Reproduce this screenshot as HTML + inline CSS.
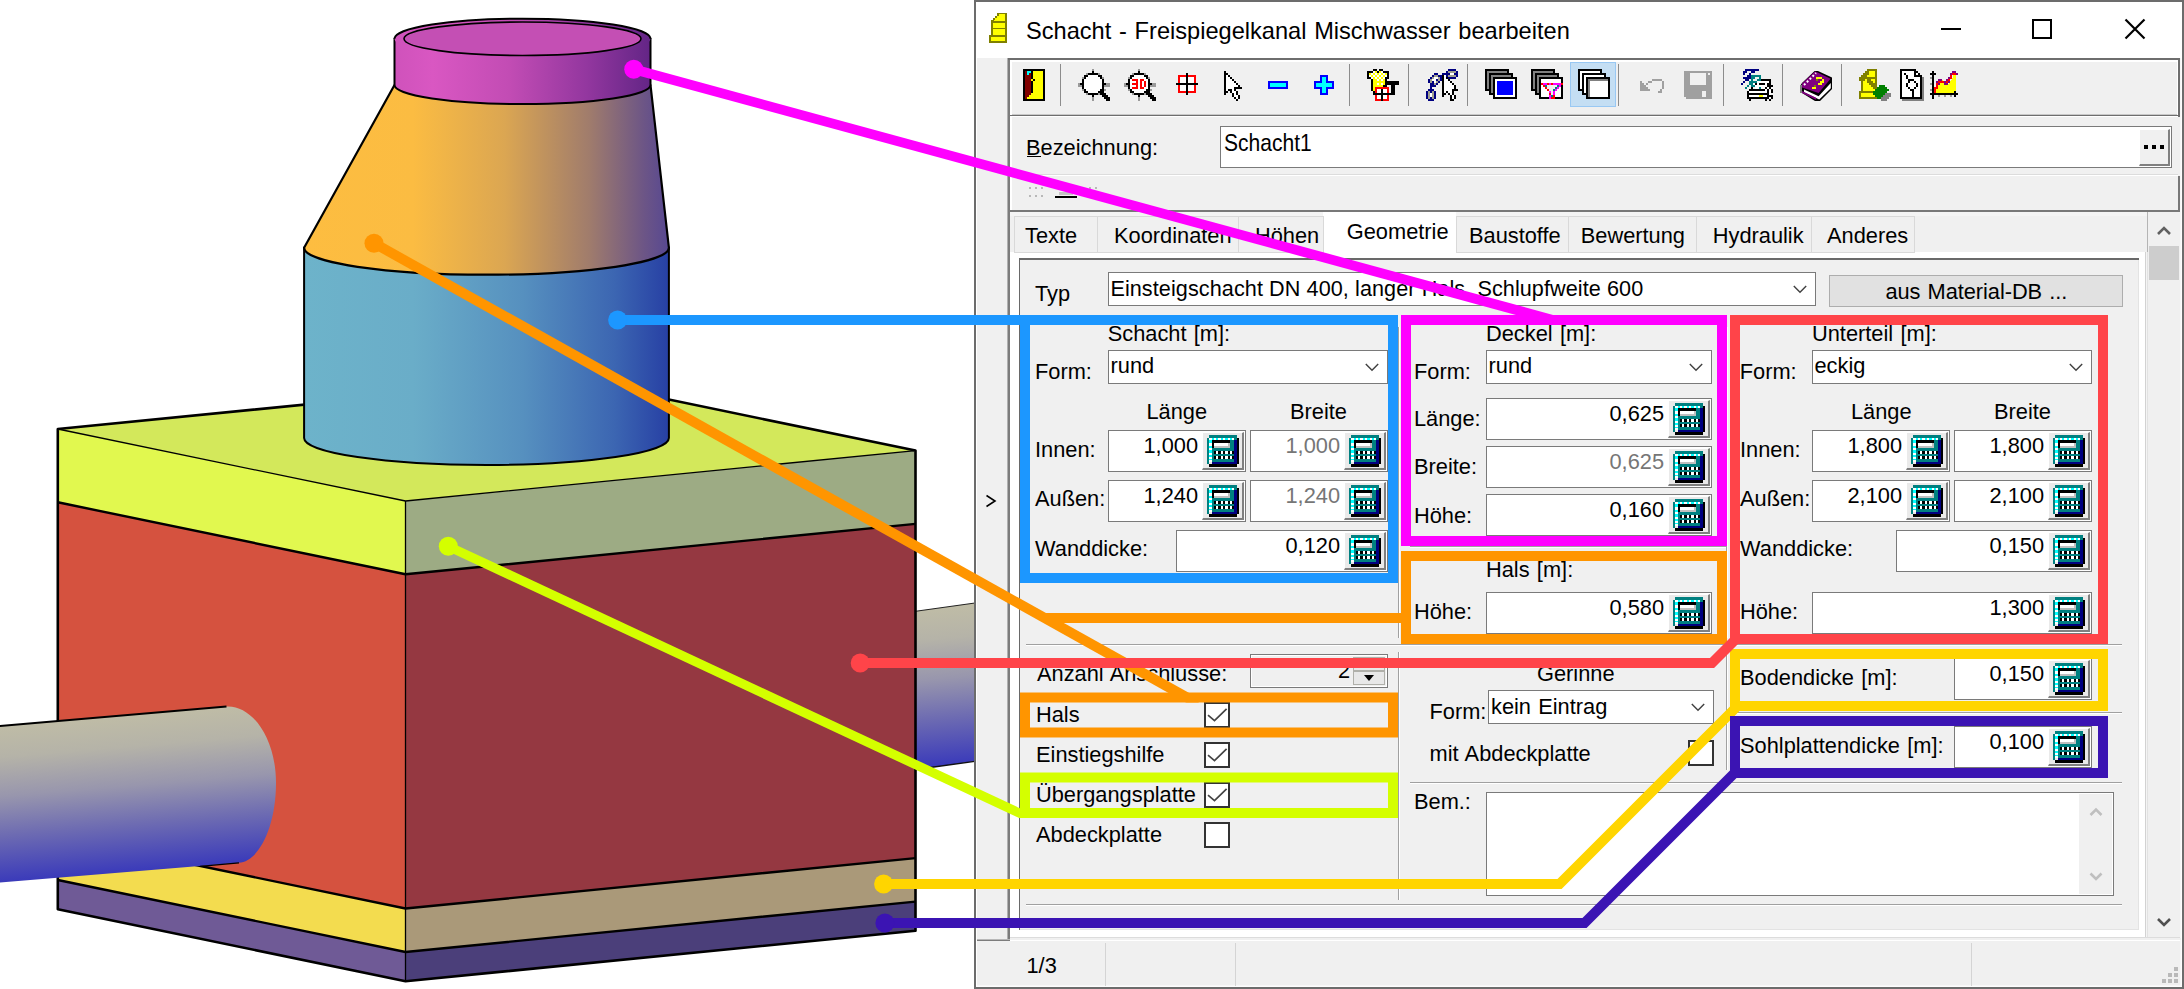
<!DOCTYPE html>
<html lang="de"><head><meta charset="utf-8"><title>Schacht - Freispiegelkanal Mischwasser bearbeiten</title>
<style>
html,body{margin:0;padding:0}
body{width:2184px;height:989px;position:relative;overflow:hidden;background:#fff;font-family:"Liberation Sans",sans-serif;font-size:21.8px;word-spacing:1.2px;color:#000}
div{position:absolute;box-sizing:content-box}
.t{white-space:nowrap;line-height:24px;height:24px}
.abs{}
.cb{background:#fff;border:1px solid #7a7a7a}
.nb{background:#fff;border:1px solid #7a7a7a}
.calc{background:#eaeaea;border-top:1px solid #fff;border-left:1px solid #fff;border-right:2px solid #808080;border-bottom:2px solid #808080;width:39px!important;height:35px!important}
.ck{background:#fff;border:2px solid #333}
.tab{background:#f0f0f0;border:1px solid #d9d9d9}
</style></head>
<body>
<svg width="0" height="0" style="position:absolute"><defs>
<g id="calcico">
<rect x="2" y="0" width="28" height="3" fill="#008080"/>
<rect x="0" y="3" width="2" height="26" fill="#008080"/>
<rect x="2" y="3" width="25" height="2" fill="#00ffff"/>
<g fill="#fff"><rect x="2" y="3" width="3" height="2"/><rect x="7" y="3" width="2" height="2"/><rect x="11" y="3" width="3" height="2"/><rect x="16" y="3" width="2" height="2"/><rect x="21" y="3" width="2" height="2"/><rect x="25" y="3" width="2" height="2"/></g>
<rect x="27" y="3" width="3" height="2" fill="#008080"/>
<rect x="2" y="5" width="3" height="22" fill="#00ffff"/>
<g fill="#fff"><rect x="2" y="8" width="3" height="3"/><rect x="2" y="13" width="3" height="2"/><rect x="2" y="18" width="3" height="2"/><rect x="2" y="22" width="3" height="2"/><rect x="2" y="25" width="3" height="2"/></g>
<rect x="5" y="5" width="22" height="22" fill="#008080"/>
<rect x="5" y="5" width="18" height="8" fill="#000"/>
<rect x="7" y="8" width="16" height="5" fill="#c0c0c0"/>
<rect x="7" y="8" width="14" height="3" fill="#fff"/>
<rect x="23" y="5" width="4" height="8" fill="#008080"/>
<rect x="7" y="16" width="20" height="3" fill="#000"/>
<rect x="7" y="21" width="20" height="3" fill="#000"/>
<g fill="#fff"><rect x="9" y="16" width="2" height="3"/><rect x="14" y="16" width="2" height="3"/><rect x="18" y="16" width="3" height="3"/><rect x="23" y="16" width="2" height="3"/><rect x="9" y="21" width="2" height="3"/><rect x="14" y="21" width="2" height="3"/><rect x="18" y="21" width="3" height="3"/><rect x="23" y="21" width="2" height="3"/></g>
<rect x="27" y="5" width="3" height="24" fill="#000080"/>
<rect x="5" y="27" width="25" height="2" fill="#000080"/>
<rect x="30" y="3" width="2" height="26" fill="#000"/>
<rect x="2" y="29" width="28" height="3" fill="#000"/>
</g>
<g id="titleico">
<path d="M8,0 H18 V31 H0 V23 H2 V7 H4 V5 H6 V3 H8 Z" fill="#808000"/>
<path d="M10,1 H16 V8 H5 V7 H6 V5 H8 V3 H10 Z" fill="#ffff00"/>
<rect x="4" y="10" width="12" height="5" fill="#ffff00"/>
<rect x="4" y="17" width="12" height="6" fill="#ffff00"/>
<rect x="2" y="25" width="14" height="4" fill="#ffff00"/>
</g>
</defs></svg>
<svg id="scene" width="980" height="989" viewBox="0 0 980 989" style="position:absolute;left:0;top:0">
<defs>
<linearGradient id="gcyl" x1="0" x2="1" y1="0" y2="0"><stop offset="0" stop-color="#6db3ca"/><stop offset="0.3" stop-color="#6aadc8"/><stop offset="0.6" stop-color="#5690bf"/><stop offset="0.85" stop-color="#3c66b2"/><stop offset="1" stop-color="#2740a4"/></linearGradient>
<linearGradient id="gcone" gradientUnits="userSpaceOnUse" x1="303" x2="670" y1="0" y2="0"><stop offset="0" stop-color="#fdbd40"/><stop offset="0.3" stop-color="#fbbc42"/><stop offset="0.55" stop-color="#dba652"/><stop offset="0.78" stop-color="#a07c6c"/><stop offset="0.93" stop-color="#6c5586"/><stop offset="1" stop-color="#564792"/></linearGradient>
<linearGradient id="gcap" x1="0" x2="1" y1="0" y2="0"><stop offset="0" stop-color="#cf52bb"/><stop offset="0.15" stop-color="#d957c2"/><stop offset="0.45" stop-color="#c24cb4"/><stop offset="0.75" stop-color="#93379f"/><stop offset="1" stop-color="#632586"/></linearGradient>
<linearGradient id="gpipe" gradientUnits="userSpaceOnUse" x1="118" y1="716" x2="131" y2="872"><stop offset="0" stop-color="#bfbca6"/><stop offset="0.2" stop-color="#b5b3a8"/><stop offset="0.45" stop-color="#9896ad"/><stop offset="0.7" stop-color="#6d6bb2"/><stop offset="1" stop-color="#3a3aba"/></linearGradient>
<linearGradient id="gpipe2" gradientUnits="userSpaceOnUse" x1="940" y1="607" x2="953" y2="765"><stop offset="0" stop-color="#bfbca6"/><stop offset="0.2" stop-color="#b5b3a8"/><stop offset="0.45" stop-color="#9896ad"/><stop offset="0.7" stop-color="#6d6bb2"/><stop offset="1" stop-color="#3a3aba"/></linearGradient>
</defs>
<polygon points="914,611.5 980,602.3 980,760.6 914,769.8" fill="url(#gpipe2)"/>
<line x1="914" y1="769.8" x2="980" y2="760.6" stroke="#111" stroke-width="1.4"/>
<line x1="914" y1="611.5" x2="980" y2="602.3" stroke="#222" stroke-width="1"/>
<polygon points="57.8,880.0 405.5,952.0 405.5,981.2 57.8,909.2" fill="#6f5a96" />
<polygon points="405.5,952.0 915.5,901.6 915.5,930.8 405.5,981.2" fill="#4b3f7a" />
<polygon points="57.8,836.5 405.5,908.5 405.5,952.0 57.8,880.0" fill="#f3dc4f" />
<polygon points="405.5,908.5 915.5,858.1 915.5,901.6 405.5,952.0" fill="#aa9979" />
<polygon points="57.8,502.3 405.5,574.3 405.5,908.5 57.8,836.5" fill="#d5523f" />
<polygon points="405.5,574.3 915.5,523.9 915.5,858.1 405.5,908.5" fill="#953841" />
<polygon points="57.8,429.0 405.5,501.0 405.5,574.3 57.8,502.3" fill="#e1f84f" />
<polygon points="405.5,501.0 915.5,450.6 915.5,523.9 405.5,574.3" fill="#9dab84" />
<polygon points="57.8,429.0 405.5,501.0 915.5,450.6 567.8,378.6" fill="#d3e85b"/>
<polyline points="57.8,502.3 405.5,574.3 915.5,523.9" fill="none" stroke="#000" stroke-width="2.4" stroke-linejoin="round"/>
<polyline points="57.8,836.5 405.5,908.5 915.5,858.1" fill="none" stroke="#000" stroke-width="2.4" stroke-linejoin="round"/>
<polyline points="57.8,880.0 405.5,952.0 915.5,901.6" fill="none" stroke="#000" stroke-width="2.4" stroke-linejoin="round"/>
<polyline points="57.8,429.0 405.5,501.0 915.5,450.6" fill="none" stroke="#000" stroke-width="1.3" stroke-linejoin="round"/>
<line x1="405.5" y1="501.0" x2="405.5" y2="981.2" stroke="#000" stroke-width="1.3"/>
<polygon points="57.8,429.0 567.8,378.6 915.5,450.6 915.5,930.8 405.5,981.2 57.8,909.2" fill="none" stroke="#000" stroke-width="2.6" stroke-linejoin="round"/>
<path d="M304.1,247.7 L304.1,438 A182.4,27 0 0 0 668.9,438 L668.9,247.7 Z" fill="url(#gcyl)" stroke="#000" stroke-width="2"/>
<path d="M394.5,85 L304.1,247.7 A182.4,27 0 0 0 668.9,247.7 L650.5,85 Z" fill="url(#gcone)" stroke="#000" stroke-width="2.2" stroke-linejoin="round"/>
<path d="M394.5,38.75 L394.5,85 A128,19 0 0 0 650.5,85 L650.5,38.75 Z" fill="url(#gcap)" stroke="#000" stroke-width="2"/>
<ellipse cx="522.5" cy="38.75" rx="128" ry="20" fill="url(#gcap)"/>
<path d="M394.5,38.75 A128,20 0 0 1 650.5,38.75" fill="none" stroke="#000" stroke-width="2"/>
<ellipse cx="522.5" cy="38.75" rx="118.5" ry="16.75" fill="#c44fb4" stroke="#000" stroke-width="1.6"/>
<path d="M-2,726.2 L226.5,706.5 C252,705 276,738 276,783 C276,828 258,862 239,862.7 L-2,882.6 Z" fill="url(#gpipe)"/>
<path d="M-2,726.2 L226.5,706.5" stroke="#000" stroke-width="1.8" fill="none"/>
<path d="M200,866.3 L239,862.9" stroke="#000" stroke-width="1.2" fill="none"/>
</svg>
<div id="win" style="left:0;top:0;width:2184px;height:989px"><div class="abs" style="left:974px;top:0px;width:1210px;height:989px;background:#6c6c6c;"></div>
<div class="abs" style="left:976px;top:2px;width:1206px;height:57px;background:#fff;"></div>
<div class="abs" style="left:976px;top:58px;width:1206px;height:929px;background:#f0f0f0;"></div>
<div class="abs" style="left:2180px;top:58px;width:1px;height:929px;background:#f7f7f7;"></div><div class="abs" style="left:2181px;top:58px;width:1px;height:929px;background:#fdfdfd;"></div><div class="abs" style="left:976px;top:985px;width:1206px;height:1px;background:#f7f7f7;"></div><div class="abs" style="left:976px;top:986px;width:1206px;height:1px;background:#fdfdfd;"></div>
<svg width="18" height="30" viewBox="0 0 18 31" preserveAspectRatio="none" style="position:absolute;left:989px;top:13px" shape-rendering="crispEdges"><use href="#titleico"/></svg>
<div class="t" style="left:1026px;top:19px;font-size:23.6px;line-height:24px">Schacht - Freispiegelkanal Mischwasser bearbeiten</div>
<div class="abs" style="left:1941px;top:28px;width:20px;height:2px;background:#000;"></div>
<div class="abs" style="left:2032px;top:19px;width:16px;height:16px;border:2px solid #000;"></div>
<svg width="24" height="24" viewBox="0 0 24 24" style="position:absolute;left:2123px;top:17px"><path d="M2.5,2.5 L21.5,21.5 M21.5,2.5 L2.5,21.5" stroke="#000" stroke-width="2.2" fill="none"/></svg>
<div class="abs" style="left:1007px;top:58px;width:1px;height:882px;background:#b0b0b0;"></div>
<div class="abs" style="left:1008px;top:58px;width:2px;height:883px;background:#7c7c7c;"></div>
<div class="abs" style="left:976px;top:2px;width:1px;height:985px;background:#fff;"></div>
<svg width="12" height="16" viewBox="0 0 12 16" style="position:absolute;left:985px;top:493px"><path d="M1.5,2.5 L10,8 L1.5,13.5" stroke="#000" stroke-width="1.6" fill="none"/></svg>
<div class="abs" style="left:1008px;top:58px;width:1172px;height:2px;background:#6e6e6e;"></div>
<div class="abs" style="left:1010px;top:60px;width:1168px;height:2px;background:#fff;"></div>
<div class="abs" style="left:1010px;top:60px;width:2px;height:150px;background:#fff;"></div>
<div class="abs" style="left:1012px;top:114px;width:1166px;height:1px;background:#c8c8c8;"></div>
<div class="abs" style="left:1010px;top:115px;width:1170px;height:1px;background:#6e6e6e;"></div>
<div class="abs" style="left:1010px;top:116px;width:1168px;height:1px;background:#fff;"></div>
<div class="abs" style="left:2177px;top:60px;width:1px;height:55px;background:#fff;"></div>
<div class="abs" style="left:2178px;top:58px;width:2px;height:59px;background:#6e6e6e;"></div>
<svg width="1170" height="54" viewBox="1010 60 1170 54" style="position:absolute;left:1010px;top:60px" shape-rendering="crispEdges"><rect x="1060" y="64" width="1" height="42" fill="#8c8c8c"/><rect x="1349" y="64" width="1" height="42" fill="#8c8c8c"/><rect x="1408" y="64" width="1" height="42" fill="#8c8c8c"/><rect x="1467" y="64" width="1" height="42" fill="#8c8c8c"/><rect x="1618" y="64" width="1" height="42" fill="#8c8c8c"/><rect x="1723" y="64" width="1" height="42" fill="#8c8c8c"/><rect x="1782" y="64" width="1" height="42" fill="#8c8c8c"/><rect x="1841" y="64" width="1" height="42" fill="#8c8c8c"/><rect x="1570.5" y="62.5" width="45" height="44" fill="#c4def3" stroke="#99c8f3" stroke-width="1"/><rect x="1023" y="69" width="22" height="2" fill="#000"/><rect x="1023" y="71" width="2" height="2" fill="#000"/><rect x="1025" y="71" width="2" height="2" fill="#800000"/><rect x="1027" y="71" width="4" height="2" fill="#00ffff"/><rect x="1031" y="71" width="2" height="2" fill="#000"/><rect x="1033" y="71" width="10" height="2" fill="#ffff00"/><rect x="1043" y="71" width="2" height="2" fill="#000"/><rect x="1023" y="73" width="2" height="2" fill="#000"/><rect x="1025" y="73" width="2" height="2" fill="#800000"/><rect x="1027" y="73" width="2" height="2" fill="#00ffff"/><rect x="1029" y="73" width="2" height="2" fill="#800000"/><rect x="1031" y="73" width="2" height="2" fill="#000"/><rect x="1033" y="73" width="10" height="2" fill="#ffff00"/><rect x="1043" y="73" width="2" height="2" fill="#000"/><rect x="1023" y="75" width="2" height="2" fill="#000"/><rect x="1025" y="75" width="6" height="2" fill="#800000"/><rect x="1031" y="75" width="2" height="2" fill="#000"/><rect x="1033" y="75" width="10" height="2" fill="#ffff00"/><rect x="1043" y="75" width="2" height="2" fill="#000"/><rect x="1023" y="77" width="2" height="2" fill="#000"/><rect x="1025" y="77" width="6" height="2" fill="#800000"/><rect x="1031" y="77" width="2" height="2" fill="#000"/><rect x="1033" y="77" width="10" height="2" fill="#ffff00"/><rect x="1043" y="77" width="2" height="2" fill="#000"/><rect x="1023" y="79" width="2" height="2" fill="#000"/><rect x="1025" y="79" width="6" height="2" fill="#800000"/><rect x="1031" y="79" width="2" height="2" fill="#ffff00"/><rect x="1033" y="79" width="2" height="2" fill="#000"/><rect x="1035" y="79" width="8" height="2" fill="#ffff00"/><rect x="1043" y="79" width="2" height="2" fill="#000"/><rect x="1023" y="81" width="2" height="2" fill="#000"/><rect x="1025" y="81" width="6" height="2" fill="#800000"/><rect x="1031" y="81" width="2" height="2" fill="#000"/><rect x="1033" y="81" width="10" height="2" fill="#ffff00"/><rect x="1043" y="81" width="2" height="2" fill="#000"/><rect x="1023" y="83" width="2" height="2" fill="#000"/><rect x="1025" y="83" width="6" height="2" fill="#800000"/><rect x="1031" y="83" width="2" height="2" fill="#000"/><rect x="1033" y="83" width="10" height="2" fill="#ffff00"/><rect x="1043" y="83" width="2" height="2" fill="#000"/><rect x="1023" y="85" width="2" height="2" fill="#000"/><rect x="1025" y="85" width="6" height="2" fill="#800000"/><rect x="1031" y="85" width="2" height="2" fill="#000"/><rect x="1033" y="85" width="10" height="2" fill="#ffff00"/><rect x="1043" y="85" width="2" height="2" fill="#000"/><rect x="1023" y="87" width="2" height="2" fill="#000"/><rect x="1025" y="87" width="6" height="2" fill="#800000"/><rect x="1031" y="87" width="2" height="2" fill="#000"/><rect x="1033" y="87" width="10" height="2" fill="#ffff00"/><rect x="1043" y="87" width="2" height="2" fill="#000"/><rect x="1023" y="89" width="2" height="2" fill="#000"/><rect x="1025" y="89" width="6" height="2" fill="#800000"/><rect x="1031" y="89" width="2" height="2" fill="#000"/><rect x="1033" y="89" width="10" height="2" fill="#ffff00"/><rect x="1043" y="89" width="2" height="2" fill="#000"/><rect x="1023" y="91" width="2" height="2" fill="#000"/><rect x="1025" y="91" width="6" height="2" fill="#800000"/><rect x="1031" y="91" width="2" height="2" fill="#000"/><rect x="1033" y="91" width="10" height="2" fill="#ffff00"/><rect x="1043" y="91" width="2" height="2" fill="#000"/><rect x="1023" y="93" width="2" height="2" fill="#000"/><rect x="1025" y="93" width="6" height="2" fill="#800000"/><rect x="1031" y="93" width="12" height="2" fill="#ffff00"/><rect x="1043" y="93" width="2" height="2" fill="#000"/><rect x="1023" y="95" width="2" height="2" fill="#000"/><rect x="1025" y="95" width="4" height="2" fill="#800000"/><rect x="1029" y="95" width="14" height="2" fill="#ffff00"/><rect x="1043" y="95" width="2" height="2" fill="#000"/><rect x="1023" y="97" width="2" height="2" fill="#000"/><rect x="1025" y="97" width="2" height="2" fill="#800000"/><rect x="1027" y="97" width="16" height="2" fill="#ffff00"/><rect x="1043" y="97" width="2" height="2" fill="#000"/><rect x="1023" y="99" width="22" height="2" fill="#000"/><rect x="1092" y="69" width="2" height="2" fill="#9a9a9a"/><rect x="1092" y="71" width="2" height="2" fill="#000"/><rect x="1086" y="73" width="2" height="2" fill="#9a9a9a"/><rect x="1088" y="73" width="10" height="2" fill="#000"/><rect x="1098" y="73" width="2" height="2" fill="#9a9a9a"/><rect x="1084" y="75" width="4" height="2" fill="#000"/><rect x="1088" y="75" width="10" height="2" fill="#fff"/><rect x="1098" y="75" width="4" height="2" fill="#000"/><rect x="1082" y="77" width="2" height="2" fill="#9a9a9a"/><rect x="1084" y="77" width="2" height="2" fill="#000"/><rect x="1086" y="77" width="14" height="2" fill="#fff"/><rect x="1100" y="77" width="2" height="2" fill="#000"/><rect x="1102" y="77" width="2" height="2" fill="#9a9a9a"/><rect x="1082" y="79" width="2" height="2" fill="#000"/><rect x="1084" y="79" width="18" height="2" fill="#fff"/><rect x="1102" y="79" width="2" height="2" fill="#000"/><rect x="1082" y="81" width="2" height="2" fill="#000"/><rect x="1084" y="81" width="18" height="2" fill="#fff"/><rect x="1102" y="81" width="2" height="2" fill="#000"/><rect x="1078" y="83" width="2" height="2" fill="#9a9a9a"/><rect x="1080" y="83" width="4" height="2" fill="#000"/><rect x="1084" y="83" width="18" height="2" fill="#fff"/><rect x="1102" y="83" width="4" height="2" fill="#000"/><rect x="1106" y="83" width="4" height="2" fill="#9a9a9a"/><rect x="1078" y="85" width="4" height="2" fill="#9a9a9a"/><rect x="1082" y="85" width="2" height="2" fill="#000"/><rect x="1084" y="85" width="18" height="2" fill="#fff"/><rect x="1102" y="85" width="2" height="2" fill="#000"/><rect x="1104" y="85" width="6" height="2" fill="#9a9a9a"/><rect x="1082" y="87" width="2" height="2" fill="#000"/><rect x="1084" y="87" width="18" height="2" fill="#fff"/><rect x="1102" y="87" width="2" height="2" fill="#000"/><rect x="1082" y="89" width="2" height="2" fill="#9a9a9a"/><rect x="1084" y="89" width="2" height="2" fill="#000"/><rect x="1086" y="89" width="14" height="2" fill="#fff"/><rect x="1100" y="89" width="4" height="2" fill="#000"/><rect x="1104" y="89" width="2" height="2" fill="#9a9a9a"/><rect x="1084" y="91" width="4" height="2" fill="#000"/><rect x="1088" y="91" width="10" height="2" fill="#fff"/><rect x="1098" y="91" width="6" height="2" fill="#000"/><rect x="1086" y="93" width="2" height="2" fill="#9a9a9a"/><rect x="1088" y="93" width="10" height="2" fill="#000"/><rect x="1098" y="93" width="2" height="2" fill="#9a9a9a"/><rect x="1100" y="93" width="6" height="2" fill="#000"/><rect x="1092" y="95" width="2" height="2" fill="#000"/><rect x="1102" y="95" width="6" height="2" fill="#000"/><rect x="1092" y="97" width="2" height="2" fill="#9a9a9a"/><rect x="1104" y="97" width="6" height="2" fill="#000"/><rect x="1092" y="99" width="2" height="2" fill="#9a9a9a"/><rect x="1106" y="99" width="4" height="2" fill="#000"/><rect x="1138" y="69" width="2" height="2" fill="#9a9a9a"/><rect x="1138" y="71" width="2" height="2" fill="#000"/><rect x="1132" y="73" width="2" height="2" fill="#9a9a9a"/><rect x="1134" y="73" width="10" height="2" fill="#000"/><rect x="1144" y="73" width="2" height="2" fill="#9a9a9a"/><rect x="1130" y="75" width="4" height="2" fill="#000"/><rect x="1134" y="75" width="10" height="2" fill="#fff"/><rect x="1144" y="75" width="4" height="2" fill="#000"/><rect x="1128" y="77" width="2" height="2" fill="#9a9a9a"/><rect x="1130" y="77" width="2" height="2" fill="#000"/><rect x="1132" y="77" width="14" height="2" fill="#fff"/><rect x="1146" y="77" width="2" height="2" fill="#000"/><rect x="1148" y="77" width="2" height="2" fill="#9a9a9a"/><rect x="1128" y="79" width="2" height="2" fill="#000"/><rect x="1130" y="79" width="2" height="2" fill="#fff"/><rect x="1132" y="79" width="6" height="2" fill="#ff0000"/><rect x="1138" y="79" width="2" height="2" fill="#fff"/><rect x="1140" y="79" width="4" height="2" fill="#ff0000"/><rect x="1144" y="79" width="4" height="2" fill="#fff"/><rect x="1148" y="79" width="2" height="2" fill="#000"/><rect x="1128" y="81" width="2" height="2" fill="#000"/><rect x="1130" y="81" width="6" height="2" fill="#fff"/><rect x="1136" y="81" width="2" height="2" fill="#ff0000"/><rect x="1138" y="81" width="2" height="2" fill="#fff"/><rect x="1140" y="81" width="2" height="2" fill="#ff0000"/><rect x="1142" y="81" width="2" height="2" fill="#fff"/><rect x="1144" y="81" width="2" height="2" fill="#ff0000"/><rect x="1146" y="81" width="2" height="2" fill="#fff"/><rect x="1148" y="81" width="2" height="2" fill="#000"/><rect x="1124" y="83" width="2" height="2" fill="#9a9a9a"/><rect x="1126" y="83" width="4" height="2" fill="#000"/><rect x="1130" y="83" width="2" height="2" fill="#fff"/><rect x="1132" y="83" width="6" height="2" fill="#ff0000"/><rect x="1138" y="83" width="2" height="2" fill="#fff"/><rect x="1140" y="83" width="2" height="2" fill="#ff0000"/><rect x="1142" y="83" width="2" height="2" fill="#fff"/><rect x="1144" y="83" width="2" height="2" fill="#ff0000"/><rect x="1146" y="83" width="2" height="2" fill="#fff"/><rect x="1148" y="83" width="4" height="2" fill="#000"/><rect x="1152" y="83" width="4" height="2" fill="#9a9a9a"/><rect x="1124" y="85" width="4" height="2" fill="#9a9a9a"/><rect x="1128" y="85" width="2" height="2" fill="#000"/><rect x="1130" y="85" width="6" height="2" fill="#fff"/><rect x="1136" y="85" width="2" height="2" fill="#ff0000"/><rect x="1138" y="85" width="2" height="2" fill="#fff"/><rect x="1140" y="85" width="2" height="2" fill="#ff0000"/><rect x="1142" y="85" width="2" height="2" fill="#fff"/><rect x="1144" y="85" width="2" height="2" fill="#ff0000"/><rect x="1146" y="85" width="2" height="2" fill="#fff"/><rect x="1148" y="85" width="2" height="2" fill="#000"/><rect x="1150" y="85" width="6" height="2" fill="#9a9a9a"/><rect x="1128" y="87" width="2" height="2" fill="#000"/><rect x="1130" y="87" width="2" height="2" fill="#fff"/><rect x="1132" y="87" width="6" height="2" fill="#ff0000"/><rect x="1138" y="87" width="2" height="2" fill="#fff"/><rect x="1140" y="87" width="4" height="2" fill="#ff0000"/><rect x="1144" y="87" width="4" height="2" fill="#fff"/><rect x="1148" y="87" width="2" height="2" fill="#000"/><rect x="1128" y="89" width="2" height="2" fill="#9a9a9a"/><rect x="1130" y="89" width="2" height="2" fill="#000"/><rect x="1132" y="89" width="14" height="2" fill="#fff"/><rect x="1146" y="89" width="4" height="2" fill="#000"/><rect x="1150" y="89" width="2" height="2" fill="#9a9a9a"/><rect x="1130" y="91" width="4" height="2" fill="#000"/><rect x="1134" y="91" width="10" height="2" fill="#fff"/><rect x="1144" y="91" width="6" height="2" fill="#000"/><rect x="1132" y="93" width="2" height="2" fill="#9a9a9a"/><rect x="1134" y="93" width="10" height="2" fill="#000"/><rect x="1144" y="93" width="2" height="2" fill="#9a9a9a"/><rect x="1146" y="93" width="6" height="2" fill="#000"/><rect x="1138" y="95" width="2" height="2" fill="#000"/><rect x="1148" y="95" width="6" height="2" fill="#000"/><rect x="1138" y="97" width="2" height="2" fill="#9a9a9a"/><rect x="1150" y="97" width="6" height="2" fill="#000"/><rect x="1138" y="99" width="2" height="2" fill="#9a9a9a"/><rect x="1152" y="99" width="4" height="2" fill="#000"/><rect x="1186" y="73" width="2" height="2" fill="#000"/><rect x="1178" y="75" width="8" height="2" fill="#ff0000"/><rect x="1186" y="75" width="2" height="2" fill="#000"/><rect x="1188" y="75" width="8" height="2" fill="#ff0000"/><rect x="1178" y="77" width="2" height="2" fill="#ff0000"/><rect x="1180" y="77" width="6" height="2" fill="#fff"/><rect x="1186" y="77" width="2" height="2" fill="#000"/><rect x="1188" y="77" width="6" height="2" fill="#fff"/><rect x="1194" y="77" width="2" height="2" fill="#ff0000"/><rect x="1178" y="79" width="2" height="2" fill="#ff0000"/><rect x="1180" y="79" width="6" height="2" fill="#fff"/><rect x="1186" y="79" width="2" height="2" fill="#000"/><rect x="1188" y="79" width="6" height="2" fill="#fff"/><rect x="1194" y="79" width="2" height="2" fill="#ff0000"/><rect x="1178" y="81" width="2" height="2" fill="#ff0000"/><rect x="1180" y="81" width="6" height="2" fill="#fff"/><rect x="1186" y="81" width="2" height="2" fill="#000"/><rect x="1188" y="81" width="6" height="2" fill="#fff"/><rect x="1194" y="81" width="2" height="2" fill="#ff0000"/><rect x="1176" y="83" width="22" height="2" fill="#000"/><rect x="1178" y="85" width="2" height="2" fill="#ff0000"/><rect x="1180" y="85" width="6" height="2" fill="#fff"/><rect x="1186" y="85" width="2" height="2" fill="#000"/><rect x="1188" y="85" width="6" height="2" fill="#fff"/><rect x="1194" y="85" width="2" height="2" fill="#ff0000"/><rect x="1178" y="87" width="2" height="2" fill="#ff0000"/><rect x="1180" y="87" width="6" height="2" fill="#fff"/><rect x="1186" y="87" width="2" height="2" fill="#000"/><rect x="1188" y="87" width="6" height="2" fill="#fff"/><rect x="1194" y="87" width="2" height="2" fill="#ff0000"/><rect x="1178" y="89" width="2" height="2" fill="#ff0000"/><rect x="1180" y="89" width="6" height="2" fill="#fff"/><rect x="1186" y="89" width="2" height="2" fill="#000"/><rect x="1188" y="89" width="6" height="2" fill="#fff"/><rect x="1194" y="89" width="2" height="2" fill="#ff0000"/><rect x="1178" y="91" width="8" height="2" fill="#ff0000"/><rect x="1186" y="91" width="2" height="2" fill="#000"/><rect x="1188" y="91" width="8" height="2" fill="#ff0000"/><rect x="1186" y="93" width="2" height="2" fill="#000"/><rect x="1224" y="71" width="2" height="2" fill="#000"/><rect x="1224" y="73" width="4" height="2" fill="#000"/><rect x="1224" y="75" width="2" height="2" fill="#000"/><rect x="1226" y="75" width="2" height="2" fill="#fff"/><rect x="1228" y="75" width="2" height="2" fill="#000"/><rect x="1224" y="77" width="2" height="2" fill="#000"/><rect x="1226" y="77" width="4" height="2" fill="#fff"/><rect x="1230" y="77" width="2" height="2" fill="#000"/><rect x="1224" y="79" width="2" height="2" fill="#000"/><rect x="1226" y="79" width="6" height="2" fill="#fff"/><rect x="1232" y="79" width="2" height="2" fill="#000"/><rect x="1224" y="81" width="2" height="2" fill="#000"/><rect x="1226" y="81" width="8" height="2" fill="#fff"/><rect x="1234" y="81" width="2" height="2" fill="#000"/><rect x="1224" y="83" width="2" height="2" fill="#000"/><rect x="1226" y="83" width="10" height="2" fill="#fff"/><rect x="1236" y="83" width="2" height="2" fill="#000"/><rect x="1224" y="85" width="2" height="2" fill="#000"/><rect x="1226" y="85" width="12" height="2" fill="#fff"/><rect x="1238" y="85" width="2" height="2" fill="#000"/><rect x="1224" y="87" width="2" height="2" fill="#000"/><rect x="1226" y="87" width="8" height="2" fill="#fff"/><rect x="1234" y="87" width="8" height="2" fill="#000"/><rect x="1224" y="89" width="2" height="2" fill="#000"/><rect x="1226" y="89" width="2" height="2" fill="#fff"/><rect x="1228" y="89" width="4" height="2" fill="#000"/><rect x="1232" y="89" width="2" height="2" fill="#fff"/><rect x="1234" y="89" width="2" height="2" fill="#000"/><rect x="1224" y="91" width="4" height="2" fill="#000"/><rect x="1230" y="91" width="2" height="2" fill="#000"/><rect x="1232" y="91" width="4" height="2" fill="#fff"/><rect x="1236" y="91" width="2" height="2" fill="#000"/><rect x="1224" y="93" width="2" height="2" fill="#000"/><rect x="1232" y="93" width="2" height="2" fill="#000"/><rect x="1234" y="93" width="2" height="2" fill="#fff"/><rect x="1236" y="93" width="2" height="2" fill="#000"/><rect x="1232" y="95" width="2" height="2" fill="#000"/><rect x="1234" y="95" width="4" height="2" fill="#fff"/><rect x="1238" y="95" width="2" height="2" fill="#000"/><rect x="1234" y="97" width="2" height="2" fill="#000"/><rect x="1236" y="97" width="2" height="2" fill="#fff"/><rect x="1238" y="97" width="2" height="2" fill="#000"/><rect x="1236" y="99" width="2" height="2" fill="#000"/><rect x="1269" y="82" width="18" height="6" fill="#00ffff" stroke="#0000ff" stroke-width="2"/><path d="M1321,76 H1327 V82 H1333 V88 H1327 V94 H1321 V88 H1315 V82 H1321 Z" fill="#00ffff" stroke="#0000ff" stroke-width="2"/><rect x="1373" y="69" width="4" height="2" fill="#000"/><rect x="1379" y="69" width="4" height="2" fill="#000"/><rect x="1367" y="71" width="6" height="2" fill="#000"/><rect x="1373" y="71" width="2" height="2" fill="#fff"/><rect x="1375" y="71" width="2" height="2" fill="#ffff00"/><rect x="1377" y="71" width="2" height="2" fill="#000"/><rect x="1379" y="71" width="2" height="2" fill="#ffff00"/><rect x="1381" y="71" width="2" height="2" fill="#fff"/><rect x="1383" y="71" width="6" height="2" fill="#000"/><rect x="1367" y="73" width="2" height="2" fill="#000"/><rect x="1369" y="73" width="2" height="2" fill="#ffff00"/><rect x="1371" y="73" width="2" height="2" fill="#fff"/><rect x="1373" y="73" width="2" height="2" fill="#ffff00"/><rect x="1375" y="73" width="2" height="2" fill="#fff"/><rect x="1377" y="73" width="2" height="2" fill="#ffff00"/><rect x="1379" y="73" width="2" height="2" fill="#fff"/><rect x="1381" y="73" width="2" height="2" fill="#ffff00"/><rect x="1383" y="73" width="2" height="2" fill="#fff"/><rect x="1385" y="73" width="2" height="2" fill="#ffff00"/><rect x="1387" y="73" width="2" height="2" fill="#000"/><rect x="1367" y="75" width="2" height="2" fill="#000"/><rect x="1369" y="75" width="2" height="2" fill="#fff"/><rect x="1371" y="75" width="2" height="2" fill="#ffff00"/><rect x="1373" y="75" width="2" height="2" fill="#fff"/><rect x="1375" y="75" width="2" height="2" fill="#ffff00"/><rect x="1377" y="75" width="2" height="2" fill="#fff"/><rect x="1379" y="75" width="2" height="2" fill="#ffff00"/><rect x="1381" y="75" width="2" height="2" fill="#fff"/><rect x="1383" y="75" width="2" height="2" fill="#ffff00"/><rect x="1385" y="75" width="2" height="2" fill="#fff"/><rect x="1387" y="75" width="2" height="2" fill="#000"/><rect x="1367" y="77" width="4" height="2" fill="#000"/><rect x="1371" y="77" width="2" height="2" fill="#fff"/><rect x="1373" y="77" width="2" height="2" fill="#ffff00"/><rect x="1375" y="77" width="2" height="2" fill="#fff"/><rect x="1377" y="77" width="2" height="2" fill="#ffff00"/><rect x="1379" y="77" width="2" height="2" fill="#fff"/><rect x="1381" y="77" width="2" height="2" fill="#ffff00"/><rect x="1383" y="77" width="2" height="2" fill="#fff"/><rect x="1385" y="77" width="4" height="2" fill="#000"/><rect x="1371" y="79" width="2" height="2" fill="#000"/><rect x="1373" y="79" width="4" height="2" fill="#ffff00"/><rect x="1377" y="79" width="2" height="2" fill="#fff"/><rect x="1379" y="79" width="2" height="2" fill="#ffff00"/><rect x="1381" y="79" width="2" height="2" fill="#fff"/><rect x="1383" y="79" width="2" height="2" fill="#ffff00"/><rect x="1385" y="79" width="2" height="2" fill="#000"/><rect x="1371" y="81" width="2" height="2" fill="#000"/><rect x="1373" y="81" width="12" height="2" fill="#ffff00"/><rect x="1385" y="81" width="14" height="2" fill="#000"/><rect x="1371" y="83" width="2" height="2" fill="#000"/><rect x="1373" y="83" width="4" height="2" fill="#ffff00"/><rect x="1377" y="83" width="2" height="2" fill="#fff"/><rect x="1379" y="83" width="2" height="2" fill="#ffff00"/><rect x="1381" y="83" width="2" height="2" fill="#fff"/><rect x="1383" y="83" width="2" height="2" fill="#ffff00"/><rect x="1385" y="83" width="14" height="2" fill="#000"/><rect x="1371" y="85" width="2" height="2" fill="#000"/><rect x="1373" y="85" width="10" height="2" fill="#ffff00"/><rect x="1383" y="85" width="4" height="2" fill="#000"/><rect x="1391" y="85" width="4" height="2" fill="#000"/><rect x="1371" y="87" width="2" height="2" fill="#000"/><rect x="1373" y="87" width="2" height="2" fill="#ffff00"/><rect x="1375" y="87" width="14" height="2" fill="#ff0000"/><rect x="1391" y="87" width="4" height="2" fill="#000"/><rect x="1371" y="89" width="2" height="2" fill="#000"/><rect x="1373" y="89" width="2" height="2" fill="#ffff00"/><rect x="1375" y="89" width="2" height="2" fill="#ff0000"/><rect x="1377" y="89" width="4" height="2" fill="#fff"/><rect x="1381" y="89" width="2" height="2" fill="#000"/><rect x="1383" y="89" width="4" height="2" fill="#fff"/><rect x="1387" y="89" width="2" height="2" fill="#ff0000"/><rect x="1391" y="89" width="4" height="2" fill="#000"/><rect x="1373" y="91" width="2" height="2" fill="#000"/><rect x="1375" y="91" width="2" height="2" fill="#ff0000"/><rect x="1377" y="91" width="4" height="2" fill="#fff"/><rect x="1381" y="91" width="2" height="2" fill="#000"/><rect x="1383" y="91" width="4" height="2" fill="#fff"/><rect x="1387" y="91" width="2" height="2" fill="#ff0000"/><rect x="1391" y="91" width="4" height="2" fill="#000"/><rect x="1373" y="93" width="22" height="2" fill="#000"/><rect x="1375" y="95" width="2" height="2" fill="#ff0000"/><rect x="1377" y="95" width="4" height="2" fill="#fff"/><rect x="1381" y="95" width="2" height="2" fill="#000"/><rect x="1383" y="95" width="4" height="2" fill="#fff"/><rect x="1387" y="95" width="2" height="2" fill="#ff0000"/><rect x="1375" y="97" width="2" height="2" fill="#ff0000"/><rect x="1377" y="97" width="4" height="2" fill="#fff"/><rect x="1381" y="97" width="2" height="2" fill="#000"/><rect x="1383" y="97" width="4" height="2" fill="#fff"/><rect x="1387" y="97" width="2" height="2" fill="#ff0000"/><rect x="1375" y="99" width="6" height="2" fill="#ff0000"/><rect x="1381" y="99" width="2" height="2" fill="#000"/><rect x="1383" y="99" width="6" height="2" fill="#ff0000"/><rect x="1448" y="69" width="8" height="2" fill="#000080"/><rect x="1446" y="71" width="2" height="2" fill="#000080"/><rect x="1448" y="71" width="8" height="2" fill="#a0a090"/><rect x="1456" y="71" width="2" height="2" fill="#000080"/><rect x="1434" y="73" width="4" height="2" fill="#000080"/><rect x="1442" y="73" width="8" height="2" fill="#000080"/><rect x="1450" y="73" width="4" height="2" fill="#fff"/><rect x="1454" y="73" width="4" height="2" fill="#000080"/><rect x="1432" y="75" width="2" height="2" fill="#000080"/><rect x="1434" y="75" width="4" height="2" fill="#a0a090"/><rect x="1438" y="75" width="4" height="2" fill="#000080"/><rect x="1442" y="75" width="2" height="2" fill="#000"/><rect x="1444" y="75" width="2" height="2" fill="#fff"/><rect x="1446" y="75" width="2" height="2" fill="#000080"/><rect x="1448" y="75" width="8" height="2" fill="#a0a090"/><rect x="1456" y="75" width="2" height="2" fill="#000080"/><rect x="1430" y="77" width="2" height="2" fill="#000080"/><rect x="1432" y="77" width="2" height="2" fill="#a0a090"/><rect x="1434" y="77" width="4" height="2" fill="#fff"/><rect x="1438" y="77" width="2" height="2" fill="#a0a090"/><rect x="1440" y="77" width="2" height="2" fill="#000080"/><rect x="1442" y="77" width="2" height="2" fill="#000"/><rect x="1444" y="77" width="2" height="2" fill="#fff"/><rect x="1446" y="77" width="2" height="2" fill="#000"/><rect x="1448" y="77" width="8" height="2" fill="#000080"/><rect x="1428" y="79" width="2" height="2" fill="#000080"/><rect x="1430" y="79" width="2" height="2" fill="#a0a090"/><rect x="1432" y="79" width="4" height="2" fill="#fff"/><rect x="1436" y="79" width="2" height="2" fill="#000080"/><rect x="1438" y="79" width="2" height="2" fill="#a0a090"/><rect x="1440" y="79" width="2" height="2" fill="#000080"/><rect x="1442" y="79" width="2" height="2" fill="#000"/><rect x="1444" y="79" width="4" height="2" fill="#fff"/><rect x="1448" y="79" width="2" height="2" fill="#000"/><rect x="1428" y="81" width="2" height="2" fill="#000080"/><rect x="1430" y="81" width="2" height="2" fill="#a0a090"/><rect x="1432" y="81" width="2" height="2" fill="#000080"/><rect x="1434" y="81" width="2" height="2" fill="#fff"/><rect x="1436" y="81" width="2" height="2" fill="#a0a090"/><rect x="1438" y="81" width="2" height="2" fill="#000080"/><rect x="1442" y="81" width="2" height="2" fill="#000"/><rect x="1444" y="81" width="6" height="2" fill="#fff"/><rect x="1450" y="81" width="2" height="2" fill="#000"/><rect x="1430" y="83" width="4" height="2" fill="#000080"/><rect x="1434" y="83" width="2" height="2" fill="#a0a090"/><rect x="1436" y="83" width="2" height="2" fill="#000080"/><rect x="1442" y="83" width="2" height="2" fill="#000"/><rect x="1444" y="83" width="8" height="2" fill="#fff"/><rect x="1452" y="83" width="2" height="2" fill="#000"/><rect x="1430" y="85" width="6" height="2" fill="#000080"/><rect x="1442" y="85" width="2" height="2" fill="#000"/><rect x="1444" y="85" width="10" height="2" fill="#fff"/><rect x="1454" y="85" width="2" height="2" fill="#000"/><rect x="1430" y="87" width="2" height="2" fill="#000080"/><rect x="1442" y="87" width="2" height="2" fill="#000"/><rect x="1444" y="87" width="10" height="2" fill="#fff"/><rect x="1454" y="87" width="2" height="2" fill="#000"/><rect x="1428" y="89" width="6" height="2" fill="#000080"/><rect x="1442" y="89" width="2" height="2" fill="#000"/><rect x="1444" y="89" width="8" height="2" fill="#fff"/><rect x="1452" y="89" width="6" height="2" fill="#000"/><rect x="1426" y="91" width="2" height="2" fill="#000080"/><rect x="1428" y="91" width="2" height="2" fill="#a0a090"/><rect x="1430" y="91" width="2" height="2" fill="#000080"/><rect x="1432" y="91" width="2" height="2" fill="#a0a090"/><rect x="1434" y="91" width="2" height="2" fill="#000080"/><rect x="1442" y="91" width="2" height="2" fill="#000"/><rect x="1444" y="91" width="2" height="2" fill="#fff"/><rect x="1446" y="91" width="2" height="2" fill="#000"/><rect x="1448" y="91" width="4" height="2" fill="#fff"/><rect x="1452" y="91" width="2" height="2" fill="#000"/><rect x="1426" y="93" width="2" height="2" fill="#000080"/><rect x="1428" y="93" width="2" height="2" fill="#a0a090"/><rect x="1430" y="93" width="2" height="2" fill="#fff"/><rect x="1432" y="93" width="2" height="2" fill="#a0a090"/><rect x="1434" y="93" width="2" height="2" fill="#000080"/><rect x="1442" y="93" width="4" height="2" fill="#000"/><rect x="1448" y="93" width="2" height="2" fill="#000"/><rect x="1450" y="93" width="2" height="2" fill="#fff"/><rect x="1452" y="93" width="2" height="2" fill="#000"/><rect x="1426" y="95" width="2" height="2" fill="#000080"/><rect x="1428" y="95" width="2" height="2" fill="#a0a090"/><rect x="1430" y="95" width="2" height="2" fill="#fff"/><rect x="1432" y="95" width="2" height="2" fill="#a0a090"/><rect x="1434" y="95" width="2" height="2" fill="#000080"/><rect x="1442" y="95" width="2" height="2" fill="#000"/><rect x="1450" y="95" width="2" height="2" fill="#000"/><rect x="1452" y="95" width="2" height="2" fill="#fff"/><rect x="1454" y="95" width="2" height="2" fill="#000"/><rect x="1426" y="97" width="2" height="2" fill="#000080"/><rect x="1428" y="97" width="2" height="2" fill="#a0a090"/><rect x="1430" y="97" width="2" height="2" fill="#000080"/><rect x="1432" y="97" width="2" height="2" fill="#a0a090"/><rect x="1434" y="97" width="2" height="2" fill="#000080"/><rect x="1450" y="97" width="2" height="2" fill="#000"/><rect x="1452" y="97" width="2" height="2" fill="#fff"/><rect x="1454" y="97" width="2" height="2" fill="#000"/><rect x="1428" y="99" width="6" height="2" fill="#000080"/><rect x="1450" y="99" width="4" height="2" fill="#000"/><rect x="1485" y="69" width="24" height="2" fill="#000"/><rect x="1485" y="71" width="2" height="2" fill="#000"/><rect x="1487" y="71" width="20" height="2" fill="#808080"/><rect x="1507" y="71" width="2" height="2" fill="#000"/><rect x="1485" y="73" width="2" height="2" fill="#000"/><rect x="1487" y="73" width="2" height="2" fill="#808080"/><rect x="1489" y="73" width="24" height="2" fill="#000"/><rect x="1485" y="75" width="2" height="2" fill="#000"/><rect x="1487" y="75" width="2" height="2" fill="#808080"/><rect x="1489" y="75" width="2" height="2" fill="#000"/><rect x="1491" y="75" width="20" height="2" fill="#808080"/><rect x="1511" y="75" width="2" height="2" fill="#000"/><rect x="1485" y="77" width="2" height="2" fill="#000"/><rect x="1487" y="77" width="2" height="2" fill="#808080"/><rect x="1489" y="77" width="2" height="2" fill="#000"/><rect x="1491" y="77" width="2" height="2" fill="#808080"/><rect x="1493" y="77" width="24" height="2" fill="#000"/><rect x="1485" y="79" width="2" height="2" fill="#000"/><rect x="1487" y="79" width="2" height="2" fill="#808080"/><rect x="1489" y="79" width="2" height="2" fill="#000"/><rect x="1491" y="79" width="2" height="2" fill="#808080"/><rect x="1493" y="79" width="2" height="2" fill="#000"/><rect x="1495" y="79" width="20" height="2" fill="#fff"/><rect x="1515" y="79" width="2" height="2" fill="#000"/><rect x="1485" y="81" width="2" height="2" fill="#000"/><rect x="1487" y="81" width="2" height="2" fill="#808080"/><rect x="1489" y="81" width="2" height="2" fill="#000"/><rect x="1491" y="81" width="2" height="2" fill="#808080"/><rect x="1493" y="81" width="2" height="2" fill="#000"/><rect x="1495" y="81" width="2" height="2" fill="#fff"/><rect x="1497" y="81" width="16" height="2" fill="#0000ff"/><rect x="1513" y="81" width="2" height="2" fill="#fff"/><rect x="1515" y="81" width="2" height="2" fill="#000"/><rect x="1485" y="83" width="2" height="2" fill="#000"/><rect x="1487" y="83" width="2" height="2" fill="#808080"/><rect x="1489" y="83" width="2" height="2" fill="#000"/><rect x="1491" y="83" width="2" height="2" fill="#808080"/><rect x="1493" y="83" width="2" height="2" fill="#000"/><rect x="1495" y="83" width="2" height="2" fill="#fff"/><rect x="1497" y="83" width="16" height="2" fill="#0000ff"/><rect x="1513" y="83" width="2" height="2" fill="#fff"/><rect x="1515" y="83" width="2" height="2" fill="#000"/><rect x="1485" y="85" width="2" height="2" fill="#000"/><rect x="1487" y="85" width="2" height="2" fill="#808080"/><rect x="1489" y="85" width="2" height="2" fill="#000"/><rect x="1491" y="85" width="2" height="2" fill="#808080"/><rect x="1493" y="85" width="2" height="2" fill="#000"/><rect x="1495" y="85" width="2" height="2" fill="#fff"/><rect x="1497" y="85" width="16" height="2" fill="#0000ff"/><rect x="1513" y="85" width="2" height="2" fill="#fff"/><rect x="1515" y="85" width="2" height="2" fill="#000"/><rect x="1485" y="87" width="2" height="2" fill="#000"/><rect x="1487" y="87" width="2" height="2" fill="#808080"/><rect x="1489" y="87" width="2" height="2" fill="#000"/><rect x="1491" y="87" width="2" height="2" fill="#808080"/><rect x="1493" y="87" width="2" height="2" fill="#000"/><rect x="1495" y="87" width="2" height="2" fill="#fff"/><rect x="1497" y="87" width="16" height="2" fill="#0000ff"/><rect x="1513" y="87" width="2" height="2" fill="#fff"/><rect x="1515" y="87" width="2" height="2" fill="#000"/><rect x="1485" y="89" width="6" height="2" fill="#000"/><rect x="1491" y="89" width="2" height="2" fill="#808080"/><rect x="1493" y="89" width="2" height="2" fill="#000"/><rect x="1495" y="89" width="2" height="2" fill="#fff"/><rect x="1497" y="89" width="16" height="2" fill="#0000ff"/><rect x="1513" y="89" width="2" height="2" fill="#fff"/><rect x="1515" y="89" width="2" height="2" fill="#000"/><rect x="1489" y="91" width="2" height="2" fill="#000"/><rect x="1491" y="91" width="2" height="2" fill="#808080"/><rect x="1493" y="91" width="2" height="2" fill="#000"/><rect x="1495" y="91" width="2" height="2" fill="#fff"/><rect x="1497" y="91" width="16" height="2" fill="#0000ff"/><rect x="1513" y="91" width="2" height="2" fill="#fff"/><rect x="1515" y="91" width="2" height="2" fill="#000"/><rect x="1489" y="93" width="6" height="2" fill="#000"/><rect x="1495" y="93" width="2" height="2" fill="#fff"/><rect x="1497" y="93" width="16" height="2" fill="#0000ff"/><rect x="1513" y="93" width="2" height="2" fill="#fff"/><rect x="1515" y="93" width="2" height="2" fill="#000"/><rect x="1493" y="95" width="2" height="2" fill="#000"/><rect x="1495" y="95" width="20" height="2" fill="#fff"/><rect x="1515" y="95" width="2" height="2" fill="#000"/><rect x="1493" y="97" width="24" height="2" fill="#000"/><rect x="1531" y="69" width="24" height="2" fill="#000"/><rect x="1531" y="71" width="2" height="2" fill="#000"/><rect x="1533" y="71" width="20" height="2" fill="#808080"/><rect x="1553" y="71" width="2" height="2" fill="#000"/><rect x="1531" y="73" width="2" height="2" fill="#000"/><rect x="1533" y="73" width="2" height="2" fill="#808080"/><rect x="1535" y="73" width="24" height="2" fill="#000"/><rect x="1531" y="75" width="2" height="2" fill="#000"/><rect x="1533" y="75" width="2" height="2" fill="#808080"/><rect x="1535" y="75" width="2" height="2" fill="#000"/><rect x="1537" y="75" width="20" height="2" fill="#808080"/><rect x="1557" y="75" width="2" height="2" fill="#000"/><rect x="1531" y="77" width="2" height="2" fill="#000"/><rect x="1533" y="77" width="2" height="2" fill="#808080"/><rect x="1535" y="77" width="2" height="2" fill="#000"/><rect x="1537" y="77" width="2" height="2" fill="#808080"/><rect x="1539" y="77" width="24" height="2" fill="#000"/><rect x="1531" y="79" width="2" height="2" fill="#000"/><rect x="1533" y="79" width="2" height="2" fill="#808080"/><rect x="1535" y="79" width="2" height="2" fill="#000"/><rect x="1537" y="79" width="2" height="2" fill="#808080"/><rect x="1539" y="79" width="2" height="2" fill="#000"/><rect x="1541" y="79" width="20" height="2" fill="#fff"/><rect x="1561" y="79" width="2" height="2" fill="#000"/><rect x="1531" y="81" width="2" height="2" fill="#000"/><rect x="1533" y="81" width="2" height="2" fill="#808080"/><rect x="1535" y="81" width="2" height="2" fill="#000"/><rect x="1537" y="81" width="2" height="2" fill="#808080"/><rect x="1539" y="81" width="2" height="2" fill="#000"/><rect x="1541" y="81" width="20" height="2" fill="#fff"/><rect x="1561" y="81" width="2" height="2" fill="#000"/><rect x="1531" y="83" width="2" height="2" fill="#000"/><rect x="1533" y="83" width="2" height="2" fill="#808080"/><rect x="1535" y="83" width="2" height="2" fill="#000"/><rect x="1537" y="83" width="2" height="2" fill="#808080"/><rect x="1539" y="83" width="2" height="2" fill="#000"/><rect x="1541" y="83" width="2" height="2" fill="#ff0000"/><rect x="1543" y="83" width="4" height="2" fill="#ff00ff"/><rect x="1547" y="83" width="2" height="2" fill="#ff0000"/><rect x="1549" y="83" width="2" height="2" fill="#ff00ff"/><rect x="1551" y="83" width="2" height="2" fill="#ff0000"/><rect x="1553" y="83" width="8" height="2" fill="#ff00ff"/><rect x="1561" y="83" width="2" height="2" fill="#ff0000"/><rect x="1531" y="85" width="2" height="2" fill="#000"/><rect x="1533" y="85" width="2" height="2" fill="#808080"/><rect x="1535" y="85" width="2" height="2" fill="#000"/><rect x="1537" y="85" width="2" height="2" fill="#808080"/><rect x="1539" y="85" width="2" height="2" fill="#000"/><rect x="1541" y="85" width="2" height="2" fill="#fff"/><rect x="1543" y="85" width="2" height="2" fill="#ff0000"/><rect x="1545" y="85" width="2" height="2" fill="#008080"/><rect x="1547" y="85" width="10" height="2" fill="#f0f0f0"/><rect x="1557" y="85" width="2" height="2" fill="#008080"/><rect x="1559" y="85" width="2" height="2" fill="#ff00ff"/><rect x="1561" y="85" width="2" height="2" fill="#000"/><rect x="1531" y="87" width="2" height="2" fill="#000"/><rect x="1533" y="87" width="2" height="2" fill="#808080"/><rect x="1535" y="87" width="2" height="2" fill="#000"/><rect x="1537" y="87" width="2" height="2" fill="#808080"/><rect x="1539" y="87" width="2" height="2" fill="#000"/><rect x="1541" y="87" width="4" height="2" fill="#fff"/><rect x="1545" y="87" width="2" height="2" fill="#ff0000"/><rect x="1547" y="87" width="8" height="2" fill="#f0f0f0"/><rect x="1555" y="87" width="2" height="2" fill="#008080"/><rect x="1557" y="87" width="2" height="2" fill="#ff00ff"/><rect x="1559" y="87" width="2" height="2" fill="#fff"/><rect x="1561" y="87" width="2" height="2" fill="#000"/><rect x="1531" y="89" width="6" height="2" fill="#000"/><rect x="1537" y="89" width="2" height="2" fill="#808080"/><rect x="1539" y="89" width="2" height="2" fill="#000"/><rect x="1541" y="89" width="6" height="2" fill="#fff"/><rect x="1547" y="89" width="2" height="2" fill="#ff0000"/><rect x="1549" y="89" width="4" height="2" fill="#f0f0f0"/><rect x="1553" y="89" width="2" height="2" fill="#008080"/><rect x="1555" y="89" width="2" height="2" fill="#ff00ff"/><rect x="1557" y="89" width="4" height="2" fill="#fff"/><rect x="1561" y="89" width="2" height="2" fill="#000"/><rect x="1535" y="91" width="2" height="2" fill="#000"/><rect x="1537" y="91" width="2" height="2" fill="#808080"/><rect x="1539" y="91" width="2" height="2" fill="#000"/><rect x="1541" y="91" width="8" height="2" fill="#fff"/><rect x="1549" y="91" width="2" height="2" fill="#ff00ff"/><rect x="1551" y="91" width="2" height="2" fill="#f0f0f0"/><rect x="1553" y="91" width="2" height="2" fill="#ff00ff"/><rect x="1555" y="91" width="6" height="2" fill="#fff"/><rect x="1561" y="91" width="2" height="2" fill="#000"/><rect x="1535" y="93" width="6" height="2" fill="#000"/><rect x="1541" y="93" width="8" height="2" fill="#fff"/><rect x="1549" y="93" width="2" height="2" fill="#ff0000"/><rect x="1551" y="93" width="2" height="2" fill="#f0f0f0"/><rect x="1553" y="93" width="2" height="2" fill="#ff00ff"/><rect x="1555" y="93" width="6" height="2" fill="#fff"/><rect x="1561" y="93" width="2" height="2" fill="#000"/><rect x="1539" y="95" width="2" height="2" fill="#000"/><rect x="1541" y="95" width="8" height="2" fill="#fff"/><rect x="1549" y="95" width="2" height="2" fill="#ff00ff"/><rect x="1551" y="95" width="2" height="2" fill="#008080"/><rect x="1553" y="95" width="2" height="2" fill="#ff0000"/><rect x="1555" y="95" width="6" height="2" fill="#fff"/><rect x="1561" y="95" width="2" height="2" fill="#000"/><rect x="1539" y="97" width="10" height="2" fill="#000"/><rect x="1549" y="97" width="2" height="2" fill="#ff00ff"/><rect x="1551" y="97" width="4" height="2" fill="#ff0000"/><rect x="1555" y="97" width="8" height="2" fill="#000"/><rect x="1578" y="69" width="24" height="2" fill="#000"/><rect x="1578" y="71" width="2" height="2" fill="#000"/><rect x="1580" y="71" width="20" height="2" fill="#fff"/><rect x="1600" y="71" width="2" height="2" fill="#000"/><rect x="1578" y="73" width="2" height="2" fill="#000"/><rect x="1580" y="73" width="2" height="2" fill="#fff"/><rect x="1582" y="73" width="24" height="2" fill="#000"/><rect x="1578" y="75" width="2" height="2" fill="#000"/><rect x="1580" y="75" width="2" height="2" fill="#fff"/><rect x="1582" y="75" width="2" height="2" fill="#000"/><rect x="1584" y="75" width="20" height="2" fill="#fff"/><rect x="1604" y="75" width="2" height="2" fill="#000"/><rect x="1578" y="77" width="2" height="2" fill="#000"/><rect x="1580" y="77" width="2" height="2" fill="#fff"/><rect x="1582" y="77" width="2" height="2" fill="#000"/><rect x="1584" y="77" width="2" height="2" fill="#fff"/><rect x="1586" y="77" width="24" height="2" fill="#000"/><rect x="1578" y="79" width="2" height="2" fill="#000"/><rect x="1580" y="79" width="2" height="2" fill="#fff"/><rect x="1582" y="79" width="2" height="2" fill="#000"/><rect x="1584" y="79" width="2" height="2" fill="#fff"/><rect x="1586" y="79" width="2" height="2" fill="#000"/><rect x="1588" y="79" width="20" height="2" fill="#808080"/><rect x="1608" y="79" width="2" height="2" fill="#000"/><rect x="1578" y="81" width="2" height="2" fill="#000"/><rect x="1580" y="81" width="2" height="2" fill="#fff"/><rect x="1582" y="81" width="2" height="2" fill="#000"/><rect x="1584" y="81" width="2" height="2" fill="#fff"/><rect x="1586" y="81" width="2" height="2" fill="#000"/><rect x="1588" y="81" width="2" height="2" fill="#808080"/><rect x="1590" y="81" width="18" height="2" fill="#fff"/><rect x="1608" y="81" width="2" height="2" fill="#000"/><rect x="1578" y="83" width="2" height="2" fill="#000"/><rect x="1580" y="83" width="2" height="2" fill="#fff"/><rect x="1582" y="83" width="2" height="2" fill="#000"/><rect x="1584" y="83" width="2" height="2" fill="#fff"/><rect x="1586" y="83" width="2" height="2" fill="#000"/><rect x="1588" y="83" width="2" height="2" fill="#808080"/><rect x="1590" y="83" width="18" height="2" fill="#fff"/><rect x="1608" y="83" width="2" height="2" fill="#000"/><rect x="1578" y="85" width="2" height="2" fill="#000"/><rect x="1580" y="85" width="2" height="2" fill="#fff"/><rect x="1582" y="85" width="2" height="2" fill="#000"/><rect x="1584" y="85" width="2" height="2" fill="#fff"/><rect x="1586" y="85" width="2" height="2" fill="#000"/><rect x="1588" y="85" width="2" height="2" fill="#808080"/><rect x="1590" y="85" width="18" height="2" fill="#fff"/><rect x="1608" y="85" width="2" height="2" fill="#000"/><rect x="1578" y="87" width="2" height="2" fill="#000"/><rect x="1580" y="87" width="2" height="2" fill="#fff"/><rect x="1582" y="87" width="2" height="2" fill="#000"/><rect x="1584" y="87" width="2" height="2" fill="#fff"/><rect x="1586" y="87" width="2" height="2" fill="#000"/><rect x="1588" y="87" width="2" height="2" fill="#808080"/><rect x="1590" y="87" width="18" height="2" fill="#fff"/><rect x="1608" y="87" width="2" height="2" fill="#000"/><rect x="1578" y="89" width="6" height="2" fill="#000"/><rect x="1584" y="89" width="2" height="2" fill="#fff"/><rect x="1586" y="89" width="2" height="2" fill="#000"/><rect x="1588" y="89" width="2" height="2" fill="#808080"/><rect x="1590" y="89" width="18" height="2" fill="#fff"/><rect x="1608" y="89" width="2" height="2" fill="#000"/><rect x="1582" y="91" width="2" height="2" fill="#000"/><rect x="1584" y="91" width="2" height="2" fill="#fff"/><rect x="1586" y="91" width="2" height="2" fill="#000"/><rect x="1588" y="91" width="2" height="2" fill="#808080"/><rect x="1590" y="91" width="18" height="2" fill="#fff"/><rect x="1608" y="91" width="2" height="2" fill="#000"/><rect x="1582" y="93" width="6" height="2" fill="#000"/><rect x="1588" y="93" width="2" height="2" fill="#808080"/><rect x="1590" y="93" width="18" height="2" fill="#fff"/><rect x="1608" y="93" width="2" height="2" fill="#000"/><rect x="1586" y="95" width="2" height="2" fill="#000"/><rect x="1588" y="95" width="2" height="2" fill="#808080"/><rect x="1590" y="95" width="18" height="2" fill="#fff"/><rect x="1608" y="95" width="2" height="2" fill="#000"/><rect x="1586" y="97" width="24" height="2" fill="#000"/><rect x="1652" y="79" width="10" height="2" fill="#a0a0a0"/><rect x="1640" y="81" width="2" height="2" fill="#a0a0a0"/><rect x="1648" y="81" width="4" height="2" fill="#a0a0a0"/><rect x="1662" y="81" width="2" height="2" fill="#a0a0a0"/><rect x="1640" y="83" width="4" height="2" fill="#a0a0a0"/><rect x="1646" y="83" width="2" height="2" fill="#a0a0a0"/><rect x="1662" y="83" width="2" height="2" fill="#a0a0a0"/><rect x="1640" y="85" width="6" height="2" fill="#a0a0a0"/><rect x="1662" y="85" width="2" height="2" fill="#a0a0a0"/><rect x="1640" y="87" width="8" height="2" fill="#a0a0a0"/><rect x="1662" y="87" width="2" height="2" fill="#a0a0a0"/><rect x="1640" y="89" width="10" height="2" fill="#a0a0a0"/><rect x="1660" y="89" width="2" height="2" fill="#a0a0a0"/><rect x="1658" y="91" width="4" height="2" fill="#a0a0a0"/><rect x="1684" y="71" width="28" height="2" fill="#a0a0a0"/><rect x="1684" y="73" width="6" height="2" fill="#a0a0a0"/><rect x="1690" y="73" width="16" height="2" fill="#f0f0f0"/><rect x="1706" y="73" width="2" height="2" fill="#a0a0a0"/><rect x="1708" y="73" width="2" height="2" fill="#f0f0f0"/><rect x="1710" y="73" width="2" height="2" fill="#a0a0a0"/><rect x="1684" y="75" width="6" height="2" fill="#a0a0a0"/><rect x="1690" y="75" width="16" height="2" fill="#f0f0f0"/><rect x="1706" y="75" width="6" height="2" fill="#a0a0a0"/><rect x="1684" y="77" width="6" height="2" fill="#a0a0a0"/><rect x="1690" y="77" width="16" height="2" fill="#f0f0f0"/><rect x="1706" y="77" width="6" height="2" fill="#a0a0a0"/><rect x="1684" y="79" width="6" height="2" fill="#a0a0a0"/><rect x="1690" y="79" width="16" height="2" fill="#f0f0f0"/><rect x="1706" y="79" width="6" height="2" fill="#a0a0a0"/><rect x="1684" y="81" width="6" height="2" fill="#a0a0a0"/><rect x="1690" y="81" width="16" height="2" fill="#f0f0f0"/><rect x="1706" y="81" width="6" height="2" fill="#a0a0a0"/><rect x="1684" y="83" width="6" height="2" fill="#a0a0a0"/><rect x="1690" y="83" width="16" height="2" fill="#f0f0f0"/><rect x="1706" y="83" width="6" height="2" fill="#a0a0a0"/><rect x="1684" y="85" width="28" height="2" fill="#a0a0a0"/><rect x="1684" y="87" width="28" height="2" fill="#a0a0a0"/><rect x="1684" y="89" width="28" height="2" fill="#a0a0a0"/><rect x="1684" y="91" width="18" height="2" fill="#a0a0a0"/><rect x="1702" y="91" width="4" height="2" fill="#f0f0f0"/><rect x="1706" y="91" width="6" height="2" fill="#a0a0a0"/><rect x="1684" y="93" width="18" height="2" fill="#a0a0a0"/><rect x="1702" y="93" width="4" height="2" fill="#f0f0f0"/><rect x="1706" y="93" width="6" height="2" fill="#a0a0a0"/><rect x="1684" y="95" width="18" height="2" fill="#a0a0a0"/><rect x="1702" y="95" width="4" height="2" fill="#f0f0f0"/><rect x="1706" y="95" width="6" height="2" fill="#a0a0a0"/><rect x="1686" y="97" width="26" height="2" fill="#a0a0a0"/><rect x="1745" y="69" width="14" height="2" fill="#000080"/><rect x="1743" y="71" width="4" height="2" fill="#000080"/><rect x="1751" y="71" width="4" height="2" fill="#000080"/><rect x="1743" y="73" width="2" height="2" fill="#000080"/><rect x="1749" y="73" width="2" height="2" fill="#000080"/><rect x="1747" y="75" width="4" height="2" fill="#000080"/><rect x="1751" y="75" width="10" height="2" fill="#008080"/><rect x="1743" y="77" width="8" height="2" fill="#000080"/><rect x="1751" y="77" width="4" height="2" fill="#008080"/><rect x="1759" y="77" width="2" height="2" fill="#008080"/><rect x="1745" y="79" width="4" height="2" fill="#000080"/><rect x="1751" y="79" width="2" height="2" fill="#008080"/><rect x="1757" y="79" width="4" height="2" fill="#008080"/><rect x="1761" y="79" width="10" height="2" fill="#000"/><rect x="1743" y="81" width="2" height="2" fill="#000080"/><rect x="1749" y="81" width="8" height="2" fill="#008080"/><rect x="1757" y="81" width="12" height="2" fill="#fff"/><rect x="1769" y="81" width="2" height="2" fill="#000"/><rect x="1741" y="83" width="2" height="2" fill="#000080"/><rect x="1749" y="83" width="4" height="2" fill="#008080"/><rect x="1753" y="83" width="2" height="2" fill="#fff"/><rect x="1755" y="83" width="2" height="2" fill="#000"/><rect x="1757" y="83" width="2" height="2" fill="#fff"/><rect x="1759" y="83" width="6" height="2" fill="#000"/><rect x="1765" y="83" width="2" height="2" fill="#fff"/><rect x="1767" y="83" width="4" height="2" fill="#000"/><rect x="1747" y="85" width="2" height="2" fill="#008080"/><rect x="1751" y="85" width="4" height="2" fill="#008080"/><rect x="1755" y="85" width="12" height="2" fill="#fff"/><rect x="1767" y="85" width="6" height="2" fill="#000"/><rect x="1745" y="87" width="2" height="2" fill="#008080"/><rect x="1751" y="87" width="2" height="2" fill="#000"/><rect x="1755" y="87" width="4" height="2" fill="#fff"/><rect x="1759" y="87" width="2" height="2" fill="#008080"/><rect x="1761" y="87" width="4" height="2" fill="#fff"/><rect x="1765" y="87" width="2" height="2" fill="#000"/><rect x="1767" y="87" width="2" height="2" fill="#fff"/><rect x="1769" y="87" width="2" height="2" fill="#000"/><rect x="1771" y="87" width="2" height="2" fill="#fff"/><rect x="1749" y="89" width="16" height="2" fill="#000"/><rect x="1765" y="89" width="2" height="2" fill="#fff"/><rect x="1767" y="89" width="2" height="2" fill="#000"/><rect x="1769" y="89" width="2" height="2" fill="#fff"/><rect x="1771" y="89" width="2" height="2" fill="#000"/><rect x="1747" y="91" width="2" height="2" fill="#000"/><rect x="1749" y="91" width="18" height="2" fill="#fff"/><rect x="1767" y="91" width="2" height="2" fill="#000"/><rect x="1769" y="91" width="2" height="2" fill="#fff"/><rect x="1771" y="91" width="2" height="2" fill="#000"/><rect x="1747" y="93" width="22" height="2" fill="#000"/><rect x="1769" y="93" width="2" height="2" fill="#fff"/><rect x="1747" y="95" width="2" height="2" fill="#000"/><rect x="1749" y="95" width="10" height="2" fill="#fff"/><rect x="1759" y="95" width="4" height="2" fill="#ffff00"/><rect x="1763" y="95" width="4" height="2" fill="#fff"/><rect x="1767" y="95" width="6" height="2" fill="#000"/><rect x="1747" y="97" width="22" height="2" fill="#000"/><rect x="1769" y="97" width="2" height="2" fill="#fff"/><rect x="1771" y="97" width="2" height="2" fill="#000"/><rect x="1749" y="99" width="2" height="2" fill="#000"/><rect x="1765" y="99" width="2" height="2" fill="#000"/><rect x="1769" y="99" width="2" height="2" fill="#000"/><g shape-rendering="auto"><polygon points="1800.4,85.4 1802,83 1814.6,71 1818,71 1832,77.4 1832,89 1820,101 1815.0,101 1802,93 1800.4,93" fill="#000"/><polygon points="1800,85 1802,85 1802,93 1800,93" fill="#808080"/><polygon points="1804,89.6 1818.6,96.2 1830.8,83 1830.8,88.2 1819.2,99.4 1804,92.2" fill="#fff"/><polygon points="1802,83.4 1814.8,71.4 1817.2,72.2 1830.6,78.8 1818.6,93 1802,87.4" fill="#800080"/><polygon points="1802,91 1816,97.8 1816,99.8 1802,93" fill="#800080"/><path d="M1804,85 L1816,73" stroke="#fff" stroke-width="2" stroke-dasharray="2 2"/></g><rect x="1816" y="77" width="6" height="2" fill="#ffff00"/><rect x="1816" y="79" width="2" height="2" fill="#808000"/><rect x="1822" y="79" width="2" height="2" fill="#ffff00"/><rect x="1820" y="81" width="4" height="2" fill="#ffff00"/><rect x="1818" y="83" width="4" height="2" fill="#ffff00"/><rect x="1814" y="85" width="2" height="2" fill="#808000"/><rect x="1812" y="87" width="4" height="2" fill="#ffff00"/><rect x="1867" y="69" width="10" height="2" fill="#808000"/><rect x="1865" y="71" width="4" height="2" fill="#808000"/><rect x="1869" y="71" width="6" height="2" fill="#ffff00"/><rect x="1875" y="71" width="2" height="2" fill="#808000"/><rect x="1863" y="73" width="6" height="2" fill="#808000"/><rect x="1869" y="73" width="6" height="2" fill="#ffff00"/><rect x="1875" y="73" width="2" height="2" fill="#808000"/><rect x="1861" y="75" width="6" height="2" fill="#808000"/><rect x="1867" y="75" width="8" height="2" fill="#ffff00"/><rect x="1875" y="75" width="2" height="2" fill="#808000"/><rect x="1859" y="77" width="18" height="2" fill="#808000"/><rect x="1859" y="79" width="6" height="2" fill="#808000"/><rect x="1865" y="79" width="2" height="2" fill="#ffff00"/><rect x="1867" y="79" width="4" height="2" fill="#808000"/><rect x="1871" y="79" width="4" height="2" fill="#ffff00"/><rect x="1875" y="79" width="2" height="2" fill="#808000"/><rect x="1861" y="81" width="2" height="2" fill="#808000"/><rect x="1863" y="81" width="4" height="2" fill="#ffff00"/><rect x="1867" y="81" width="6" height="2" fill="#808000"/><rect x="1873" y="81" width="2" height="2" fill="#ffff00"/><rect x="1875" y="81" width="2" height="2" fill="#808000"/><rect x="1861" y="83" width="2" height="2" fill="#808000"/><rect x="1863" y="83" width="6" height="2" fill="#ffff00"/><rect x="1869" y="83" width="8" height="2" fill="#808000"/><rect x="1861" y="85" width="2" height="2" fill="#808000"/><rect x="1863" y="85" width="8" height="2" fill="#ffff00"/><rect x="1871" y="85" width="6" height="2" fill="#808000"/><rect x="1879" y="85" width="6" height="2" fill="#008000"/><rect x="1861" y="87" width="2" height="2" fill="#808000"/><rect x="1863" y="87" width="10" height="2" fill="#ffff00"/><rect x="1873" y="87" width="4" height="2" fill="#808000"/><rect x="1877" y="87" width="10" height="2" fill="#008000"/><rect x="1861" y="89" width="2" height="2" fill="#808000"/><rect x="1863" y="89" width="12" height="2" fill="#ffff00"/><rect x="1875" y="89" width="14" height="2" fill="#008000"/><rect x="1859" y="91" width="14" height="2" fill="#808000"/><rect x="1873" y="91" width="14" height="2" fill="#008000"/><rect x="1859" y="93" width="2" height="2" fill="#808000"/><rect x="1861" y="93" width="12" height="2" fill="#ffff00"/><rect x="1873" y="93" width="12" height="2" fill="#008000"/><rect x="1885" y="93" width="6" height="2" fill="#808080"/><rect x="1859" y="95" width="2" height="2" fill="#808000"/><rect x="1861" y="95" width="14" height="2" fill="#ffff00"/><rect x="1875" y="95" width="8" height="2" fill="#008000"/><rect x="1883" y="95" width="8" height="2" fill="#808080"/><rect x="1859" y="97" width="18" height="2" fill="#808000"/><rect x="1877" y="97" width="4" height="2" fill="#008000"/><rect x="1881" y="97" width="8" height="2" fill="#808080"/><rect x="1881" y="99" width="6" height="2" fill="#808080"/><rect x="1900" y="69" width="16" height="2" fill="#000"/><rect x="1900" y="71" width="2" height="2" fill="#000"/><rect x="1902" y="71" width="12" height="2" fill="#fff"/><rect x="1914" y="71" width="4" height="2" fill="#000"/><rect x="1900" y="73" width="2" height="2" fill="#000"/><rect x="1902" y="73" width="2" height="2" fill="#fff"/><rect x="1904" y="73" width="2" height="2" fill="#000"/><rect x="1906" y="73" width="8" height="2" fill="#fff"/><rect x="1914" y="73" width="2" height="2" fill="#000"/><rect x="1916" y="73" width="2" height="2" fill="#fff"/><rect x="1918" y="73" width="2" height="2" fill="#000"/><rect x="1900" y="75" width="2" height="2" fill="#000"/><rect x="1902" y="75" width="4" height="2" fill="#fff"/><rect x="1906" y="75" width="2" height="2" fill="#000"/><rect x="1908" y="75" width="6" height="2" fill="#fff"/><rect x="1914" y="75" width="8" height="2" fill="#000"/><rect x="1900" y="77" width="2" height="2" fill="#000"/><rect x="1902" y="77" width="4" height="2" fill="#fff"/><rect x="1906" y="77" width="2" height="2" fill="#000"/><rect x="1908" y="77" width="12" height="2" fill="#fff"/><rect x="1920" y="77" width="2" height="2" fill="#000"/><rect x="1922" y="77" width="2" height="2" fill="#808080"/><rect x="1900" y="79" width="2" height="2" fill="#000"/><rect x="1902" y="79" width="6" height="2" fill="#fff"/><rect x="1908" y="79" width="6" height="2" fill="#000"/><rect x="1914" y="79" width="6" height="2" fill="#fff"/><rect x="1920" y="79" width="2" height="2" fill="#000"/><rect x="1922" y="79" width="2" height="2" fill="#808080"/><rect x="1900" y="81" width="2" height="2" fill="#000"/><rect x="1902" y="81" width="6" height="2" fill="#fff"/><rect x="1908" y="81" width="2" height="2" fill="#000"/><rect x="1910" y="81" width="4" height="2" fill="#fff"/><rect x="1914" y="81" width="2" height="2" fill="#000"/><rect x="1916" y="81" width="4" height="2" fill="#fff"/><rect x="1920" y="81" width="2" height="2" fill="#000"/><rect x="1922" y="81" width="2" height="2" fill="#808080"/><rect x="1900" y="83" width="2" height="2" fill="#000"/><rect x="1902" y="83" width="4" height="2" fill="#fff"/><rect x="1906" y="83" width="2" height="2" fill="#000"/><rect x="1908" y="83" width="8" height="2" fill="#fff"/><rect x="1916" y="83" width="2" height="2" fill="#000"/><rect x="1918" y="83" width="2" height="2" fill="#fff"/><rect x="1920" y="83" width="2" height="2" fill="#000"/><rect x="1922" y="83" width="2" height="2" fill="#808080"/><rect x="1900" y="85" width="2" height="2" fill="#000"/><rect x="1902" y="85" width="4" height="2" fill="#fff"/><rect x="1906" y="85" width="2" height="2" fill="#000"/><rect x="1908" y="85" width="8" height="2" fill="#fff"/><rect x="1916" y="85" width="2" height="2" fill="#000"/><rect x="1918" y="85" width="2" height="2" fill="#fff"/><rect x="1920" y="85" width="2" height="2" fill="#000"/><rect x="1922" y="85" width="2" height="2" fill="#808080"/><rect x="1900" y="87" width="2" height="2" fill="#000"/><rect x="1902" y="87" width="6" height="2" fill="#fff"/><rect x="1908" y="87" width="2" height="2" fill="#000"/><rect x="1910" y="87" width="4" height="2" fill="#fff"/><rect x="1914" y="87" width="2" height="2" fill="#000"/><rect x="1916" y="87" width="4" height="2" fill="#fff"/><rect x="1920" y="87" width="2" height="2" fill="#000"/><rect x="1922" y="87" width="2" height="2" fill="#808080"/><rect x="1900" y="89" width="2" height="2" fill="#000"/><rect x="1902" y="89" width="8" height="2" fill="#fff"/><rect x="1910" y="89" width="4" height="2" fill="#000"/><rect x="1914" y="89" width="6" height="2" fill="#fff"/><rect x="1920" y="89" width="2" height="2" fill="#000"/><rect x="1922" y="89" width="2" height="2" fill="#808080"/><rect x="1900" y="91" width="2" height="2" fill="#000"/><rect x="1902" y="91" width="10" height="2" fill="#fff"/><rect x="1912" y="91" width="2" height="2" fill="#000"/><rect x="1914" y="91" width="6" height="2" fill="#fff"/><rect x="1920" y="91" width="2" height="2" fill="#000"/><rect x="1922" y="91" width="2" height="2" fill="#808080"/><rect x="1900" y="93" width="2" height="2" fill="#000"/><rect x="1902" y="93" width="10" height="2" fill="#fff"/><rect x="1912" y="93" width="2" height="2" fill="#000"/><rect x="1914" y="93" width="6" height="2" fill="#fff"/><rect x="1920" y="93" width="2" height="2" fill="#000"/><rect x="1922" y="93" width="2" height="2" fill="#808080"/><rect x="1900" y="95" width="2" height="2" fill="#000"/><rect x="1902" y="95" width="10" height="2" fill="#fff"/><rect x="1912" y="95" width="2" height="2" fill="#000"/><rect x="1914" y="95" width="6" height="2" fill="#fff"/><rect x="1920" y="95" width="2" height="2" fill="#000"/><rect x="1922" y="95" width="2" height="2" fill="#808080"/><rect x="1900" y="97" width="22" height="2" fill="#000"/><rect x="1922" y="97" width="2" height="2" fill="#808080"/><rect x="1902" y="99" width="22" height="2" fill="#808080"/><polygon points="1934,93 1937,87 1940,81 1942,80 1946,82 1949,84 1952,79 1954,74 1956,73 1956,93" fill="#ffff00"/><rect x="1932" y="71" width="2" height="2" fill="#000"/><rect x="1952" y="71" width="4" height="2" fill="#800080"/><rect x="1930" y="73" width="6" height="2" fill="#000"/><rect x="1950" y="73" width="2" height="2" fill="#800080"/><rect x="1952" y="73" width="4" height="2" fill="#ff0000"/><rect x="1956" y="73" width="2" height="2" fill="#800080"/><rect x="1932" y="75" width="2" height="2" fill="#000"/><rect x="1950" y="75" width="2" height="2" fill="#ff0000"/><rect x="1930" y="77" width="2" height="2" fill="#9a9a9a"/><rect x="1932" y="77" width="2" height="2" fill="#000"/><rect x="1948" y="77" width="2" height="2" fill="#800080"/><rect x="1950" y="77" width="2" height="2" fill="#ff0000"/><rect x="1932" y="79" width="2" height="2" fill="#000"/><rect x="1938" y="79" width="4" height="2" fill="#800080"/><rect x="1946" y="79" width="2" height="2" fill="#800080"/><rect x="1948" y="79" width="2" height="2" fill="#ff0000"/><rect x="1932" y="81" width="2" height="2" fill="#000"/><rect x="1936" y="81" width="2" height="2" fill="#800080"/><rect x="1938" y="81" width="6" height="2" fill="#ff0000"/><rect x="1944" y="81" width="2" height="2" fill="#800080"/><rect x="1946" y="81" width="2" height="2" fill="#ff0000"/><rect x="1948" y="81" width="2" height="2" fill="#800080"/><rect x="1930" y="83" width="2" height="2" fill="#9a9a9a"/><rect x="1932" y="83" width="2" height="2" fill="#000"/><rect x="1936" y="83" width="2" height="2" fill="#ff0000"/><rect x="1938" y="83" width="2" height="2" fill="#800080"/><rect x="1944" y="83" width="4" height="2" fill="#800080"/><rect x="1932" y="85" width="2" height="2" fill="#000"/><rect x="1936" y="85" width="2" height="2" fill="#ff0000"/><rect x="1932" y="87" width="2" height="2" fill="#000"/><rect x="1934" y="87" width="4" height="2" fill="#ff0000"/><rect x="1930" y="89" width="2" height="2" fill="#9a9a9a"/><rect x="1932" y="89" width="2" height="2" fill="#000"/><rect x="1934" y="89" width="2" height="2" fill="#ff0000"/><rect x="1932" y="91" width="2" height="2" fill="#000"/><rect x="1934" y="91" width="2" height="2" fill="#ff0000"/><rect x="1954" y="91" width="2" height="2" fill="#000"/><rect x="1930" y="93" width="28" height="2" fill="#000"/><rect x="1932" y="95" width="2" height="2" fill="#000"/><rect x="1938" y="95" width="2" height="2" fill="#9a9a9a"/><rect x="1944" y="95" width="2" height="2" fill="#9a9a9a"/><rect x="1950" y="95" width="2" height="2" fill="#9a9a9a"/><rect x="1954" y="95" width="2" height="2" fill="#000"/><rect x="1932" y="97" width="2" height="2" fill="#000"/></svg>
<div class="abs" style="left:2178px;top:176px;width:2px;height:36px;background:#787878;"></div>
<div class="abs" style="left:1010px;top:210px;width:1170px;height:2px;background:#787878;"></div>
<div class="abs" style="left:1010px;top:174px;width:1168px;height:1px;background:#dcdcdc;"></div>
<div class="abs" style="left:1010px;top:175px;width:1168px;height:1px;background:#fff;"></div>
<div class="t " style="left:1026px;top:136.00px;">Bezeichnung:</div><div class="abs" style="left:1027px;top:156px;width:14px;height:1px;background:#000;"></div>
<div class="abs" style="left:1220px;top:126px;width:950px;height:40px;background:#fff;border:1px solid #7a7a7a;"></div>
<div class="t" style="left:1224px;top:131px;font-size:24.4px;transform:scaleX(0.862);transform-origin:0 0;color:#000">Schacht1</div>
<div class="abs" style="left:2139px;top:129px;width:28px;height:34px;background:#f0f0f0;border-top:1px solid #fff;border-left:1px solid #fff;border-right:2px solid #808080;border-bottom:2px solid #808080;"></div>
<div class="abs" style="left:2144px;top:145px;width:4px;height:4px;background:#000;"></div><div class="abs" style="left:2152px;top:145px;width:4px;height:4px;background:#000;"></div><div class="abs" style="left:2160px;top:145px;width:4px;height:4px;background:#000;"></div>
<svg width="80" height="16" viewBox="0 0 80 16" style="position:absolute;left:1026px;top:184px" shape-rendering="crispEdges"><g fill="#b8b8b8"><rect x="3" y="3" width="2" height="2"/><rect x="9" y="3" width="2" height="2"/><rect x="15" y="3" width="2" height="2"/><rect x="3" y="11" width="2" height="2"/><rect x="9" y="11" width="2" height="2"/><rect x="15" y="11" width="2" height="2"/><rect x="63" y="3" width="2" height="2"/><rect x="69" y="3" width="2" height="2"/></g><rect x="29" y="12" width="22" height="2" fill="#000"/><rect x="33" y="8" width="14" height="3" fill="#c4c4c4"/></svg>
<div class="abs" style="left:1010px;top:212px;width:1137px;height:4px;background:#f4f4f4;"></div>
<div class="abs" style="left:1010px;top:252px;width:1135px;height:686px;background:#fff;"></div>
<div class="abs" style="left:1010px;top:938px;width:1171px;height:2px;background:#f0f0f0;"></div>
<div class="abs" style="left:2145px;top:252px;width:1px;height:686px;background:#d2d2d2;"></div>
<div class="abs" style="left:2146px;top:252px;width:1px;height:686px;background:#f4f4f4;"></div>
<div class="abs" style="left:2147px;top:212px;width:1px;height:40px;background:#b4b4b4;"></div>
<div class="abs" style="left:2147px;top:252px;width:1px;height:686px;background:#e2e2e2;"></div>
<div class="abs" style="left:2148px;top:212px;width:32px;height:726px;background:#f0f0f0;"></div>
<div class="abs" style="left:2149px;top:246px;width:30px;height:34px;background:#cdcdcd;"></div>
<svg width="16" height="10" viewBox="0 0 16 10" style="position:absolute;left:2156px;top:226px"><path d="M2,8 L8,2 L14,8" stroke="#606060" stroke-width="2.6" fill="none"/></svg>
<svg width="16" height="10" viewBox="0 0 16 10" style="position:absolute;left:2156px;top:917px"><path d="M2,2 L8,8 L14,2" stroke="#505050" stroke-width="2.6" fill="none"/></svg>
<div class="tab" style="left:1014px;top:216px;width:82px;height:35px;"></div>
<div class="t " style="left:1025px;top:224.00px;">Texte</div>
<div class="tab" style="left:1097px;top:216px;width:140px;height:35px;"></div>
<div class="t " style="left:1114px;top:224.00px;">Koordinaten</div>
<div class="tab" style="left:1238px;top:216px;width:84px;height:35px;"></div>
<div class="t " style="left:1255px;top:224.00px;">Höhen</div>
<div class="tab" style="left:1456px;top:216px;width:111px;height:35px;"></div>
<div class="t " style="left:1469px;top:224.00px;">Baustoffe</div>
<div class="tab" style="left:1568px;top:216px;width:127px;height:35px;"></div>
<div class="t " style="left:1580.75px;top:224.00px;">Bewertung</div>
<div class="tab" style="left:1696px;top:216px;width:114px;height:35px;"></div>
<div class="t " style="left:1712.75px;top:224.00px;">Hydraulik</div>
<div class="tab" style="left:1811px;top:216px;width:102px;height:35px;"></div>
<div class="t " style="left:1827px;top:224.00px;">Anderes</div>
<div class="abs" style="left:1323px;top:212px;width:133px;height:46px;background:#fff;"></div>
<div class="abs" style="left:1323px;top:216px;width:1px;height:37px;background:#d9d9d9;"></div>
<div class="abs" style="left:1456px;top:216px;width:1px;height:37px;background:#d9d9d9;"></div>
<div class="t " style="left:1346.8px;top:220.00px;">Geometrie</div>
<div class="abs" style="left:1019px;top:258px;width:1120px;height:672px;background:#f0f0f0;"></div>
<div class="abs" style="left:1019px;top:258px;width:1120px;height:2px;background:#696969;"></div>
<div class="abs" style="left:1019px;top:258px;width:1px;height:672px;background:#696969;"></div>
<div class="abs" style="left:2138px;top:260px;width:1px;height:670px;background:#e3e3e3;"></div>
<div class="abs" style="left:1020px;top:929px;width:1119px;height:1px;background:#e3e3e3;"></div>
<div class="t " style="left:1035px;top:282.00px;">Typ</div>
<div class="cb" style="left:1108px;top:272px;width:706px;height:32px;"><svg class="chev" width="14" height="9" viewBox="0 0 14 9" style="position:absolute;right:8px;top:11.5px"><path d="M0.8,0.9 L7,7.3 L13.2,0.9" fill="none" stroke="#404040" stroke-width="1.4"/></svg></div><div class="t " style="left:1110.4px;top:277.00px;"><span style="letter-spacing:0.09px;font-size:21.6px;word-spacing:0">Einsteigschacht DN 400, langer Hals, Schlupfweite 600</span></div>
<div class="abs" style="left:1829px;top:275px;width:292px;height:30px;background:#e1e1e1;border:1px solid #adadad;"></div>
<div class="t " style="left:1885.4px;top:280.00px;letter-spacing:-0.05px;">aus Material-DB ...</div>
<div class="t " style="left:1107.75px;top:322.00px;">Schacht [m]:</div>
<div class="t " style="left:1035px;top:360.00px;">Form:</div>
<div class="cb" style="left:1108px;top:350px;width:278px;height:32px;"><svg class="chev" width="14" height="9" viewBox="0 0 14 9" style="position:absolute;right:8px;top:11.5px"><path d="M0.8,0.9 L7,7.3 L13.2,0.9" fill="none" stroke="#404040" stroke-width="1.4"/></svg></div><div class="t " style="left:1110.5px;top:354.00px;">rund</div>
<div class="t " style="left:1146.5px;top:400.00px;">Länge</div><div class="t " style="left:1290px;top:400.00px;">Breite</div>
<div class="t " style="left:1035px;top:438.00px;">Innen:</div><div class="nb" style="left:1108px;top:430px;width:136px;height:40px;"></div><div class="t" style="left:1108px;top:434.00px;width:90px;text-align:right;">1,000</div><div class="calc" style="left:1202px;top:432px;width:42px;height:38px;"><svg width="32" height="32" viewBox="0 0 32 32" style="position:absolute;left:4px;top:2px" shape-rendering="crispEdges"><use href="#calcico"/></svg></div><div class="nb" style="left:1250px;top:430px;width:136px;height:40px;"></div><div class="t" style="left:1250px;top:434.00px;width:90px;text-align:right;color:#767676;">1,000</div><div class="calc" style="left:1344px;top:432px;width:42px;height:38px;"><svg width="32" height="32" viewBox="0 0 32 32" style="position:absolute;left:4px;top:2px" shape-rendering="crispEdges"><use href="#calcico"/></svg></div>
<div class="t " style="left:1035px;top:487.00px;">Außen:</div><div class="nb" style="left:1108px;top:480px;width:136px;height:40px;"></div><div class="t" style="left:1108px;top:484.00px;width:90px;text-align:right;">1,240</div><div class="calc" style="left:1202px;top:482px;width:42px;height:38px;"><svg width="32" height="32" viewBox="0 0 32 32" style="position:absolute;left:4px;top:2px" shape-rendering="crispEdges"><use href="#calcico"/></svg></div><div class="nb" style="left:1250px;top:480px;width:136px;height:40px;"></div><div class="t" style="left:1250px;top:484.00px;width:90px;text-align:right;color:#767676;">1,240</div><div class="calc" style="left:1344px;top:482px;width:42px;height:38px;"><svg width="32" height="32" viewBox="0 0 32 32" style="position:absolute;left:4px;top:2px" shape-rendering="crispEdges"><use href="#calcico"/></svg></div>
<div class="t " style="left:1035px;top:537.00px;">Wanddicke:</div><div class="nb" style="left:1176px;top:530px;width:210px;height:40px;"></div><div class="t" style="left:1176px;top:534.00px;width:164px;text-align:right;">0,120</div><div class="calc" style="left:1344px;top:532px;width:42px;height:38px;"><svg width="32" height="32" viewBox="0 0 32 32" style="position:absolute;left:4px;top:2px" shape-rendering="crispEdges"><use href="#calcico"/></svg></div>
<div class="t " style="left:1486px;top:322.00px;">Deckel [m]:</div>
<div class="t " style="left:1414px;top:360.00px;">Form:</div>
<div class="cb" style="left:1486px;top:350px;width:224px;height:32px;"><svg class="chev" width="14" height="9" viewBox="0 0 14 9" style="position:absolute;right:8px;top:11.5px"><path d="M0.8,0.9 L7,7.3 L13.2,0.9" fill="none" stroke="#404040" stroke-width="1.4"/></svg></div><div class="t " style="left:1488.5px;top:354.00px;">rund</div>
<div class="t " style="left:1414px;top:407.00px;">Länge:</div><div class="nb" style="left:1486px;top:398px;width:224px;height:40px;"></div><div class="t" style="left:1486px;top:402.00px;width:178px;text-align:right;">0,625</div><div class="calc" style="left:1668px;top:400px;width:42px;height:38px;"><svg width="32" height="32" viewBox="0 0 32 32" style="position:absolute;left:4px;top:2px" shape-rendering="crispEdges"><use href="#calcico"/></svg></div>
<div class="t " style="left:1414px;top:455.00px;">Breite:</div><div class="nb" style="left:1486px;top:446px;width:224px;height:40px;"></div><div class="t" style="left:1486px;top:450.00px;width:178px;text-align:right;color:#767676;">0,625</div><div class="calc" style="left:1668px;top:448px;width:42px;height:38px;"><svg width="32" height="32" viewBox="0 0 32 32" style="position:absolute;left:4px;top:2px" shape-rendering="crispEdges"><use href="#calcico"/></svg></div>
<div class="t " style="left:1414px;top:504.00px;">Höhe:</div><div class="nb" style="left:1486px;top:494px;width:224px;height:40px;"></div><div class="t" style="left:1486px;top:498.00px;width:178px;text-align:right;">0,160</div><div class="calc" style="left:1668px;top:496px;width:42px;height:38px;"><svg width="32" height="32" viewBox="0 0 32 32" style="position:absolute;left:4px;top:2px" shape-rendering="crispEdges"><use href="#calcico"/></svg></div>
<div class="t " style="left:1486px;top:558.00px;">Hals [m]:</div>
<div class="t " style="left:1414px;top:600.00px;">Höhe:</div><div class="nb" style="left:1486px;top:592px;width:224px;height:40px;"></div><div class="t" style="left:1486px;top:596.00px;width:178px;text-align:right;">0,580</div><div class="calc" style="left:1668px;top:594px;width:42px;height:38px;"><svg width="32" height="32" viewBox="0 0 32 32" style="position:absolute;left:4px;top:2px" shape-rendering="crispEdges"><use href="#calcico"/></svg></div>
<div class="t " style="left:1812px;top:322.00px;">Unterteil [m]:</div>
<div class="t " style="left:1739.75px;top:360.00px;">Form:</div>
<div class="cb" style="left:1812px;top:350px;width:278px;height:32px;"><svg class="chev" width="14" height="9" viewBox="0 0 14 9" style="position:absolute;right:8px;top:11.5px"><path d="M0.8,0.9 L7,7.3 L13.2,0.9" fill="none" stroke="#404040" stroke-width="1.4"/></svg></div><div class="t " style="left:1814.5px;top:354.00px;">eckig</div>
<div class="t " style="left:1851px;top:400.00px;">Länge</div><div class="t " style="left:1994px;top:400.00px;">Breite</div>
<div class="t " style="left:1740px;top:438.00px;">Innen:</div><div class="nb" style="left:1812px;top:430px;width:136px;height:40px;"></div><div class="t" style="left:1812px;top:434.00px;width:90px;text-align:right;">1,800</div><div class="calc" style="left:1906px;top:432px;width:42px;height:38px;"><svg width="32" height="32" viewBox="0 0 32 32" style="position:absolute;left:4px;top:2px" shape-rendering="crispEdges"><use href="#calcico"/></svg></div><div class="nb" style="left:1954px;top:430px;width:136px;height:40px;"></div><div class="t" style="left:1954px;top:434.00px;width:90px;text-align:right;">1,800</div><div class="calc" style="left:2048px;top:432px;width:42px;height:38px;"><svg width="32" height="32" viewBox="0 0 32 32" style="position:absolute;left:4px;top:2px" shape-rendering="crispEdges"><use href="#calcico"/></svg></div>
<div class="t " style="left:1740px;top:487.00px;">Außen:</div><div class="nb" style="left:1812px;top:480px;width:136px;height:40px;"></div><div class="t" style="left:1812px;top:484.00px;width:90px;text-align:right;">2,100</div><div class="calc" style="left:1906px;top:482px;width:42px;height:38px;"><svg width="32" height="32" viewBox="0 0 32 32" style="position:absolute;left:4px;top:2px" shape-rendering="crispEdges"><use href="#calcico"/></svg></div><div class="nb" style="left:1954px;top:480px;width:136px;height:40px;"></div><div class="t" style="left:1954px;top:484.00px;width:90px;text-align:right;">2,100</div><div class="calc" style="left:2048px;top:482px;width:42px;height:38px;"><svg width="32" height="32" viewBox="0 0 32 32" style="position:absolute;left:4px;top:2px" shape-rendering="crispEdges"><use href="#calcico"/></svg></div>
<div class="t " style="left:1740px;top:537.00px;">Wanddicke:</div><div class="nb" style="left:1896px;top:530px;width:194px;height:40px;"></div><div class="t" style="left:1896px;top:534.00px;width:148px;text-align:right;">0,150</div><div class="calc" style="left:2048px;top:532px;width:42px;height:38px;"><svg width="32" height="32" viewBox="0 0 32 32" style="position:absolute;left:4px;top:2px" shape-rendering="crispEdges"><use href="#calcico"/></svg></div>
<div class="t " style="left:1740px;top:600.00px;">Höhe:</div><div class="nb" style="left:1812px;top:592px;width:278px;height:40px;"></div><div class="t" style="left:1812px;top:596.00px;width:232px;text-align:right;">1,300</div><div class="calc" style="left:2048px;top:594px;width:42px;height:38px;"><svg width="32" height="32" viewBox="0 0 32 32" style="position:absolute;left:4px;top:2px" shape-rendering="crispEdges"><use href="#calcico"/></svg></div>
<div class="abs" style="left:1026px;top:644px;width:1096px;height:1px;background:#a0a0a0;"></div><div class="abs" style="left:1026px;top:645px;width:1096px;height:1px;background:#fff;"></div>
<div class="abs" style="left:1730px;top:712px;width:392px;height:1px;background:#a0a0a0;"></div><div class="abs" style="left:1730px;top:713px;width:392px;height:1px;background:#fff;"></div>
<div class="abs" style="left:1410px;top:782px;width:712px;height:1px;background:#a0a0a0;"></div><div class="abs" style="left:1410px;top:783px;width:712px;height:1px;background:#fff;"></div>
<div class="abs" style="left:1026px;top:904px;width:1096px;height:1px;background:#a0a0a0;"></div><div class="abs" style="left:1026px;top:905px;width:1096px;height:1px;background:#fff;"></div>
<div class="abs" style="left:1398px;top:327px;width:1px;height:311px;background:#a0a0a0;"></div><div class="abs" style="left:1399px;top:327px;width:1px;height:311px;background:#fff;"></div><div class="abs" style="left:1398px;top:652px;width:1px;height:248px;background:#a0a0a0;"></div><div class="abs" style="left:1399px;top:652px;width:1px;height:248px;background:#fff;"></div>
<div class="abs" style="left:1726px;top:327px;width:1px;height:311px;background:#a0a0a0;"></div><div class="abs" style="left:1727px;top:327px;width:1px;height:311px;background:#fff;"></div><div class="abs" style="left:1726px;top:652px;width:1px;height:118px;background:#a0a0a0;"></div><div class="abs" style="left:1727px;top:652px;width:1px;height:118px;background:#fff;"></div>
<div class="abs" style="left:1410px;top:546px;width:316px;height:1px;background:#a0a0a0;"></div><div class="abs" style="left:1410px;top:547px;width:316px;height:1px;background:#fff;"></div>
<div class="t " style="left:1740px;top:666.00px;">Bodendicke [m]:</div><div class="nb" style="left:1954px;top:658px;width:136px;height:40px;"></div><div class="t" style="left:1954px;top:662.00px;width:90px;text-align:right;">0,150</div><div class="calc" style="left:2048px;top:660px;width:42px;height:38px;"><svg width="32" height="32" viewBox="0 0 32 32" style="position:absolute;left:4px;top:2px" shape-rendering="crispEdges"><use href="#calcico"/></svg></div>
<div class="t " style="left:1740px;top:734.00px;">Sohlplattendicke [m]:</div><div class="nb" style="left:1954px;top:726px;width:136px;height:40px;"></div><div class="t" style="left:1954px;top:730.00px;width:90px;text-align:right;">0,100</div><div class="calc" style="left:2048px;top:728px;width:42px;height:38px;"><svg width="32" height="32" viewBox="0 0 32 32" style="position:absolute;left:4px;top:2px" shape-rendering="crispEdges"><use href="#calcico"/></svg></div>
<div class="t " style="left:1037px;top:662.00px;">Anzahl Anschlüsse:</div>
<div class="abs" style="left:1250px;top:654px;width:136px;height:32px;background:#fff;border:1px solid #7a7a7a;"></div><div class="abs" style="left:1252px;top:656px;width:134px;height:30px;background:#f0f0f0;"></div>
<div class="t" style="left:1250px;top:659px;width:100px;text-align:right">2</div>
<div class="abs" style="left:1353px;top:657px;width:30px;height:12px;background:#e8e8e8;border:1px solid #b0b0aa;"></div>
<div class="abs" style="left:1353px;top:671px;width:30px;height:12px;background:#e8e8e8;border:1px solid #b0b0aa;"></div>
<svg width="12" height="6" viewBox="0 0 12 6" style="position:absolute;left:1363px;top:675px"><path d="M1,0 L11,0 L6,6 Z" fill="#000"/></svg>
<div class="t " style="left:1036px;top:703.00px;">Hals</div><div class="ck" style="left:1204px;top:702px;width:22px;height:22px;"><svg width="22" height="22" viewBox="0 0 22 22" style="position:absolute;left:0;top:0"><path d="M2,11.2 L8.5,16.6 L20.6,4.8" fill="none" stroke="#444" stroke-width="1.7"/></svg></div>
<div class="t " style="left:1036px;top:743.00px;">Einstiegshilfe</div><div class="ck" style="left:1204px;top:742px;width:22px;height:22px;"><svg width="22" height="22" viewBox="0 0 22 22" style="position:absolute;left:0;top:0"><path d="M2,11.2 L8.5,16.6 L20.6,4.8" fill="none" stroke="#444" stroke-width="1.7"/></svg></div>
<div class="t " style="left:1036px;top:783.00px;">Übergangsplatte</div><div class="ck" style="left:1204px;top:782px;width:22px;height:22px;"><svg width="22" height="22" viewBox="0 0 22 22" style="position:absolute;left:0;top:0"><path d="M2,11.2 L8.5,16.6 L20.6,4.8" fill="none" stroke="#444" stroke-width="1.7"/></svg></div>
<div class="t " style="left:1036px;top:823.00px;">Abdeckplatte</div><div class="ck" style="left:1204px;top:822px;width:22px;height:22px;"></div>
<div class="t " style="left:1537px;top:662.00px;">Gerinne</div>
<div class="t " style="left:1429.5px;top:700.00px;">Form:</div>
<div class="cb" style="left:1488px;top:690px;width:224px;height:32px;"><svg class="chev" width="14" height="9" viewBox="0 0 14 9" style="position:absolute;right:8px;top:11.5px"><path d="M0.8,0.9 L7,7.3 L13.2,0.9" fill="none" stroke="#404040" stroke-width="1.4"/></svg></div><div class="t " style="left:1491px;top:695.00px;">kein Eintrag</div>
<div class="t " style="left:1429.5px;top:742.00px;">mit Abdeckplatte</div><div class="ck" style="left:1688px;top:740px;width:22px;height:22px;"></div>
<div class="t " style="left:1414px;top:790.00px;">Bem.:</div>
<div class="abs" style="left:1486px;top:792px;width:626px;height:102px;background:#fff;border:1px solid #7a7a7a;"></div>
<div class="abs" style="left:2079px;top:794px;width:33px;height:100px;background:#f0f0f0;"></div>
<svg width="14" height="9" viewBox="0 0 14 9" style="position:absolute;left:2089px;top:807px"><path d="M1.5,8 L7,2.5 L12.5,8" stroke="#bfbfbf" stroke-width="2.6" fill="none"/></svg>
<svg width="14" height="9" viewBox="0 0 14 9" style="position:absolute;left:2089px;top:872px"><path d="M1.5,1.5 L7,7 L12.5,1.5" stroke="#bfbfbf" stroke-width="2.6" fill="none"/></svg>
<div class="abs" style="left:1010px;top:937px;width:1170px;height:1px;background:#dcdcdc;"></div><div class="abs" style="left:1010px;top:940px;width:1170px;height:1px;background:#fff;"></div><div class="abs" style="left:977px;top:939px;width:33px;height:1px;background:#b8b8b8;"></div><div class="abs" style="left:977px;top:940px;width:33px;height:1px;background:#7c7c7c;"></div>
<div class="t " style="left:1026.5px;top:954.00px;">1/3</div>
<div class="abs" style="left:1105px;top:943px;width:1px;height:43px;background:#d4d4d4;"></div>
<div class="abs" style="left:1235px;top:943px;width:1px;height:43px;background:#d4d4d4;"></div>
<div class="abs" style="left:1971px;top:943px;width:1px;height:43px;background:#d4d4d4;"></div>
<svg width="16" height="16" viewBox="0 0 16 16" style="position:absolute;left:2162px;top:967px" shape-rendering="crispEdges"><g fill="#b9b9b9"><rect x="12" y="0" width="4" height="4"/><rect x="6" y="6" width="4" height="4"/><rect x="12" y="6" width="4" height="4"/><rect x="0" y="12" width="4" height="4"/><rect x="6" y="12" width="4" height="4"/><rect x="12" y="12" width="4" height="4"/></g></svg></div>
<svg id="lines" width="2184" height="989" viewBox="0 0 2184 989" style="position:absolute;left:0;top:0;pointer-events:none">
<defs><clipPath id="cl1"><rect x="0" y="0" width="1030" height="818"/></clipPath><clipPath id="cl2"><rect x="0" y="0" width="2184" height="702.5"/></clipPath><clipPath id="cl3"><rect x="0" y="0" width="2184" height="325"/></clipPath></defs>
<polyline points="448.3,546.3 1034,819.9" fill="none" stroke="#d4ff00" stroke-width="9.2" stroke-linejoin="miter" clip-path="url(#cl1)"/>
<circle cx="448.3" cy="546.3" r="9.5" fill="#d4ff00"/>
<rect x="1025.0" y="777.5" width="368" height="35.5" fill="none" stroke="#d4ff00" stroke-width="10"/>
<polyline points="374,243.2 1198,703.7" fill="none" stroke="#ff9500" stroke-width="10" stroke-linejoin="miter" clip-path="url(#cl2)"/>
<circle cx="374" cy="243.2" r="9.5" fill="#ff9500"/>
<polyline points="1044,618 1403,618" fill="none" stroke="#ff9500" stroke-width="10" stroke-linejoin="miter"/>
<rect x="1025.0" y="697.5" width="368" height="35.0" fill="none" stroke="#ff9500" stroke-width="10"/>
<rect x="1406.0" y="556.0" width="316" height="83" fill="none" stroke="#ff9500" stroke-width="10"/>
<polyline points="617.6,320 1022,320" fill="none" stroke="#1c97ff" stroke-width="10" stroke-linejoin="miter"/>
<circle cx="617.6" cy="320" r="9.5" fill="#1c97ff"/>
<rect x="1025.0" y="320.0" width="368" height="258" fill="none" stroke="#1c97ff" stroke-width="10"/>
<polyline points="633.75,69.25 1570,324.6" fill="none" stroke="#ff00ff" stroke-width="9.7" stroke-linejoin="miter" clip-path="url(#cl3)"/>
<circle cx="633.75" cy="69.25" r="9.5" fill="#ff00ff"/>
<rect x="1406.0" y="320.0" width="316" height="221" fill="none" stroke="#ff00ff" stroke-width="10"/>
<polyline points="883.6,884 1559.5,884 1737,706.5" fill="none" stroke="#ffd500" stroke-width="10" stroke-linejoin="miter"/>
<circle cx="883.6" cy="884" r="9.5" fill="#ffd500"/>
<rect x="1735.0" y="654.0" width="368" height="52" fill="none" stroke="#ffd500" stroke-width="10"/>
<polyline points="884.9,923 1584.5,923 1736,771.5" fill="none" stroke="#3b14b3" stroke-width="10" stroke-linejoin="miter"/>
<circle cx="884.9" cy="923" r="9.5" fill="#3b14b3"/>
<rect x="1735.0" y="721.0" width="368" height="52" fill="none" stroke="#3b14b3" stroke-width="10"/>
<polyline points="860.2,663 1712,663 1737,638" fill="none" stroke="#ff4449" stroke-width="10" stroke-linejoin="miter"/>
<circle cx="860.2" cy="663" r="9.5" fill="#ff4449"/>
<rect x="1735.0" y="320.0" width="368" height="319" fill="none" stroke="#ff4449" stroke-width="10"/>
</svg>
</body></html>
